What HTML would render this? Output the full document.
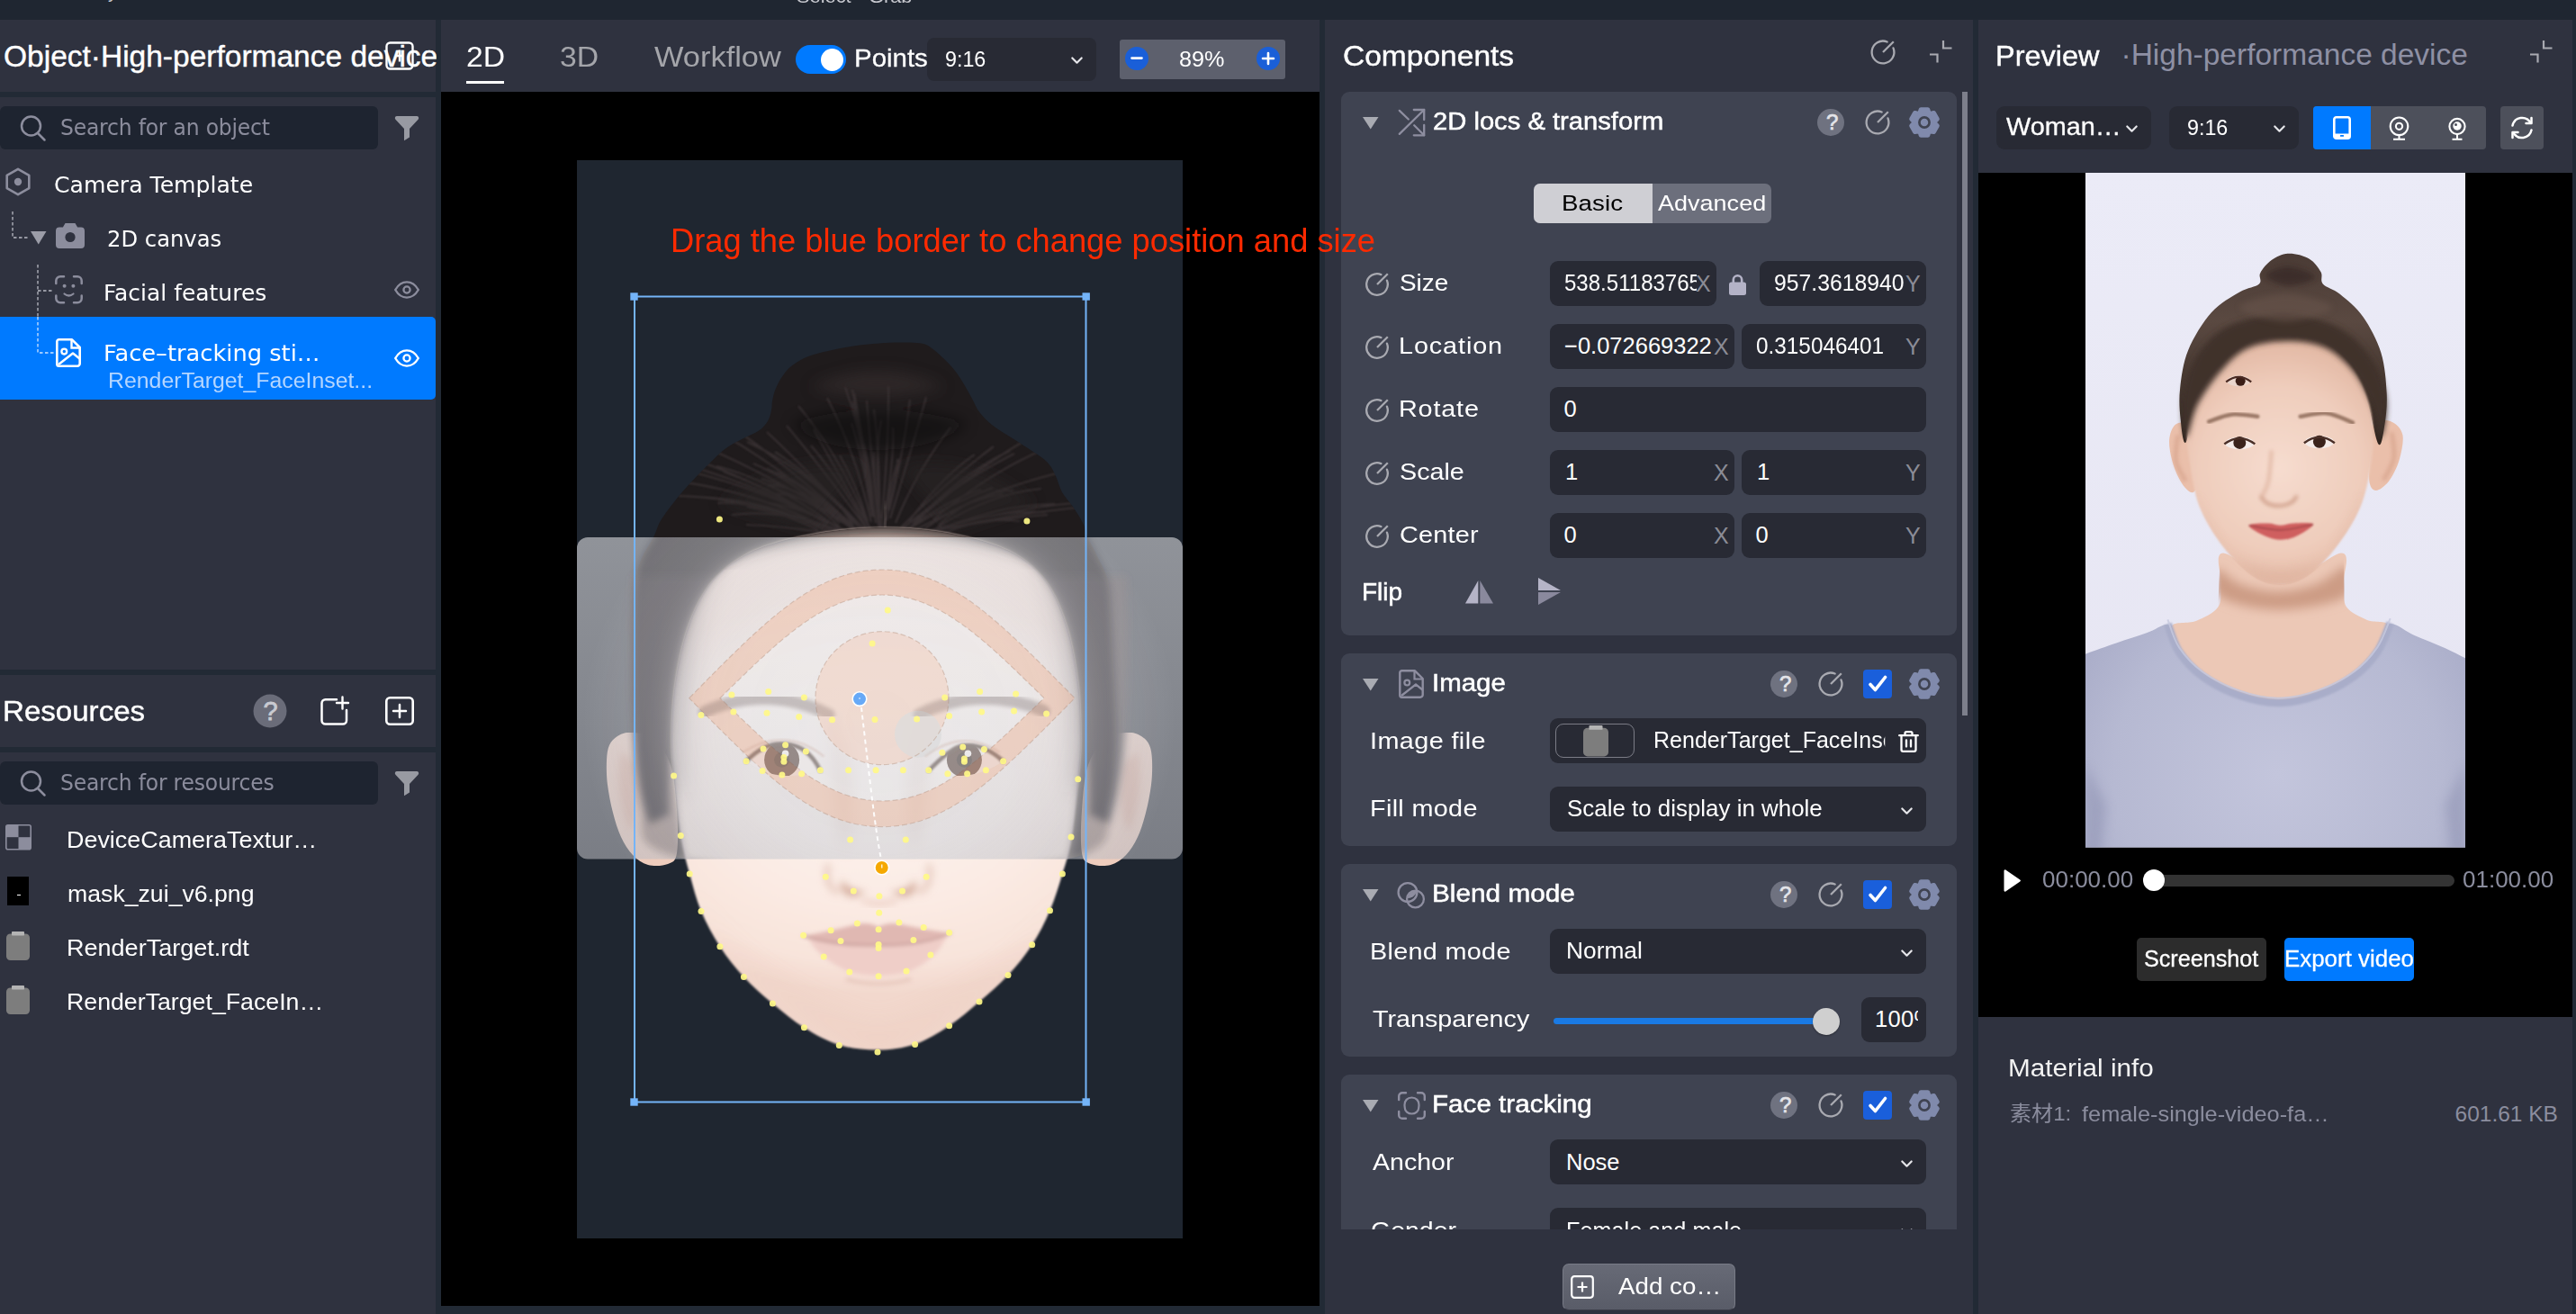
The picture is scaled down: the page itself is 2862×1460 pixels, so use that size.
<!DOCTYPE html>
<html><head><meta charset="utf-8"><title>Editor</title>
<style>
html,body{margin:0;padding:0}
body{width:2862px;height:1460px;position:relative;overflow:hidden;background:#222a35;font-family:'Liberation Sans',sans-serif}
body div,body svg{position:absolute;box-sizing:border-box}
.t{white-space:nowrap;line-height:1}
svg{overflow:visible}
</style></head><body>
<div style="left:0px;top:0px;width:2862px;height:22px;background:#1f2631;"></div>
<div style="left:0px;top:22px;width:484px;height:1438px;background:#2f323f;"></div>
<div style="left:0px;top:102px;width:484px;height:6px;background:#222a35;"></div>
<div style="left:0px;top:744px;width:484px;height:6px;background:#222a35;"></div>
<div style="left:0px;top:830px;width:484px;height:6px;background:#222a35;"></div>
<div style="left:490px;top:22px;width:976px;height:80px;background:#2f323f;"></div>
<div style="left:490px;top:102px;width:976px;height:1349px;background:#000;"></div>
<div style="left:1472px;top:22px;width:720px;height:1438px;background:#2f323f;"></div>
<div style="left:2198px;top:22px;width:660px;height:1438px;background:#2f323f;"></div>
<svg style="left:428px;top:46px;" width="32" height="32" viewBox="0 0 32 32"><rect x="1.5" y="1.5" width="29" height="29" rx="4" fill="none" stroke="#fff" stroke-width="2.4"/><path d="M16 9.500v13M12.500 16h7" stroke="#fff" stroke-width="2.400"/></svg>
<div style="left:0px;top:118px;width:420px;height:47.5px;background:#1e2430;border-radius:6px;"></div>
<svg style="left:20px;top:126px;" width="34" height="34" viewBox="0 0 34 34"><circle cx="14.5" cy="14" r="10.5" fill="none" stroke="#8c8d9d" stroke-width="2.5"/><path d="M22 22l7.5 7.5" stroke="#8c8d9d" stroke-width="2.5" stroke-linecap="round"/></svg>
<svg style="left:438px;top:128.5px;" width="28" height="28" viewBox="0 0 28 28"><path d="M3 0H25a2.200 2.200 0 0 1 1.600 3.700L17 14V23.500L11 27.200V14L1.400 3.700A2.200 2.200 0 0 1 3 0z" fill="#989aa2"/></svg>
<div style="left:0px;top:846px;width:420px;height:47.5px;background:#1e2430;border-radius:6px;"></div>
<svg style="left:20px;top:854px;" width="34" height="34" viewBox="0 0 34 34"><circle cx="14.5" cy="14" r="10.5" fill="none" stroke="#8c8d9d" stroke-width="2.5"/><path d="M22 22l7.5 7.5" stroke="#8c8d9d" stroke-width="2.5" stroke-linecap="round"/></svg>
<svg style="left:438px;top:856.5px;" width="28" height="28" viewBox="0 0 28 28"><path d="M3 0H25a2.200 2.200 0 0 1 1.600 3.700L17 14V23.500L11 27.200V14L1.400 3.700A2.200 2.200 0 0 1 3 0z" fill="#989aa2"/></svg>
<svg style="left:4px;top:186px;" width="32" height="32" viewBox="0 0 32 32"><path d="M16 1.8l12.3 7.1v14.2L16 30.2 3.7 23.1V8.9z" fill="none" stroke="#8c8d9d" stroke-width="2.6" stroke-linejoin="round"/><circle cx="16" cy="16" r="4.2" fill="#8c8d9d"/></svg>
<svg style="left:0;top:108px" width="484" height="340" viewBox="0 108 484 340"><g fill="none" stroke="#b9bac4" stroke-width="1.3" stroke-dasharray="3.5 2.5"><path d="M14 235V264H33"/><path d="M42 294V392H60"/><path d="M42 323H60"/></g></svg>
<svg style="left:33.5px;top:257px;" width="18" height="15" viewBox="0 0 18 15"><path d="M0 0h17.5L8.75 14.5z" fill="#9c9da8"/></svg>
<svg style="left:62px;top:248px;" width="32" height="28" viewBox="0 0 32 28"><path d="M10.5 0h11l2.6 4.6H28a4 4 0 0 1 4 4V24a4 4 0 0 1-4 4H4a4 4 0 0 1-4-4V8.6a4 4 0 0 1 4-4h3.9z" fill="#8c8d9d"/><circle cx="16" cy="15.5" r="5.6" fill="#2f323f"/></svg>
<svg style="left:60.5px;top:306px;" width="31" height="31.5" viewBox="0 0 31 31.5"><g fill="none" stroke="#8c8d9d" stroke-width="2.5" stroke-linecap="round"><path d="M1.3 9V6a4.7 4.7 0 0 1 4.7-4.7H10M21 1.3h4a4.7 4.7 0 0 1 4.7 4.7v3M29.7 22.5v3a4.7 4.7 0 0 1-4.7 4.7h-4M10 30.2H6a4.7 4.7 0 0 1-4.7-4.7v-3"/><path d="M10.5 20.5q5 4 10 0" stroke-width="2.2"/></g><circle cx="10.6" cy="11.7" r="2" fill="#8c8d9d"/><circle cx="20.4" cy="11.7" r="2" fill="#8c8d9d"/></svg>
<svg style="left:438px;top:312px;" width="28" height="20" viewBox="0 0 28 20"><path d="M1.2 10C4.5 4.3 9 1.4 14 1.4S23.5 4.3 26.8 10C23.5 15.7 19 18.6 14 18.6S4.500 15.7 1.2 10z" fill="none" stroke="#8c8d9d" stroke-width="2.4" stroke-linejoin="round"/><circle cx="14" cy="10" r="3.6" fill="none" stroke="#8c8d9d" stroke-width="2.3"/></svg>
<div style="left:0px;top:352px;width:484px;height:92px;background:#007aff;border-radius:0 5px 5px 0;"></div>
<svg style="left:0;top:350px" width="70" height="50" viewBox="0 350 70 50"><g fill="none" stroke="#cfe3ff" stroke-width="1.3" stroke-dasharray="3.5 2.5"><path d="M42 352V392H60"/></g></svg>
<svg style="left:62px;top:376px;" width="28" height="32" viewBox="0 0 28 32"><path d="M3.5 1.3H18l8.700 8.700V28a2.700 2.700 0 0 1-2.700 2.700H3.5A2.200 2.200 0 0 1 1.300 28.500V3.500A2.200 2.200 0 0 1 3.500 1.300z" fill="none" stroke="#fff" stroke-width="2.6" stroke-linejoin="round"/><path d="M17.5 1.500V10.500H26.500" fill="none" stroke="#fff" stroke-width="2.4"/><circle cx="9.300" cy="14.600" r="2.900" fill="none" stroke="#fff" stroke-width="2.300"/><path d="M3 29L19 16.500l7.500 6" fill="none" stroke="#fff" stroke-width="2.500" stroke-linejoin="round"/></svg>
<svg style="left:438px;top:388px;" width="28" height="20" viewBox="0 0 28 20"><path d="M1.2 10C4.5 4.3 9 1.4 14 1.4S23.5 4.3 26.8 10C23.5 15.7 19 18.6 14 18.6S4.500 15.7 1.2 10z" fill="none" stroke="#fff" stroke-width="2.4" stroke-linejoin="round"/><circle cx="14" cy="10" r="3.6" fill="none" stroke="#fff" stroke-width="2.3"/></svg>
<svg style="left:281px;top:771px;" width="38" height="38" viewBox="0 0 38 38"><circle cx="19" cy="19" r="18.500" fill="#6a6c79"/></svg>
<svg style="left:355.5px;top:774px;" width="33" height="32" viewBox="0 0 33 32"><path d="M18 3.200H5.500A4 4 0 0 0 1.500 7.200V26.500a4 4 0 0 0 4 4H25a4 4 0 0 0 4-4V15" fill="none" stroke="#fff" stroke-width="2.500" stroke-linecap="round"/><path d="M24.500 0.500V13.500M18 7H31" stroke="#fff" stroke-width="2.400" stroke-linecap="round"/></svg>
<svg style="left:428px;top:774px;" width="32" height="32" viewBox="0 0 32 32"><rect x="1.300" y="1.300" width="29.400" height="29.400" rx="4" fill="none" stroke="#fff" stroke-width="2.600"/><path d="M16 9V23M9 16H23" stroke="#fff" stroke-width="2.500" stroke-linecap="round"/></svg>
<svg style="left:5.5px;top:916px;" width="29" height="28.5" viewBox="0 0 29 28.5"><rect x="0.800" y="0.800" width="27.400" height="26.900" rx="2" fill="none" stroke="#8c8d9d" stroke-width="1.600"/><rect x="1" y="1" width="13.500" height="13.200" fill="#8c8d9d"/><rect x="14.500" y="14.200" width="13.500" height="13.300" fill="#8c8d9d"/></svg>
<div style="left:8px;top:974px;width:24px;height:31.5px;background:#000;"></div>
<div style="left:18.5px;top:993.5px;width:4px;height:1.5px;background:#fff;"></div>
<svg style="left:7px;top:1034.5px;" width="26.0" height="32.0" viewBox="0 0 26 32"><rect x="0" y="2.500" width="26" height="29.500" rx="4.500" fill="#7d7d7d"/><rect x="6" y="0" width="14" height="4.500" rx="0.800" fill="#b4b4b4"/></svg>
<svg style="left:7px;top:1094.5px;" width="26.0" height="32.0" viewBox="0 0 26 32"><rect x="0" y="2.500" width="26" height="29.500" rx="4.500" fill="#7d7d7d"/><rect x="6" y="0" width="14" height="4.500" rx="0.800" fill="#b4b4b4"/></svg>
<div style="left:518px;top:90px;width:42px;height:2.5px;background:#fff;"></div>
<div style="left:884px;top:50px;width:56px;height:31.5px;background:#007aff;border-radius:16px;"></div>
<div style="left:911.5px;top:53.5px;width:25px;height:25px;background:#fff;border-radius:13px;"></div>
<div style="left:1030px;top:42px;width:187.5px;height:47.5px;background:#282a34;border-radius:8px;"></div>
<svg style="left:1189.5px;top:63px;" width="13" height="8.5" viewBox="0 0 13 8.5"><path d="M1.300 1.500L6.500 6.700L11.700 1.500" fill="none" stroke="#e6e6ea" stroke-width="2.200" stroke-linecap="round" stroke-linejoin="round"/></svg>
<div style="left:1244px;top:44px;width:184px;height:44px;background:#5d606d;border-radius:3px;"></div>
<svg style="left:1250px;top:52px;" width="26" height="26" viewBox="0 0 26 26"><circle cx="13" cy="13" r="13" fill="#1a5fd8"/><path d="M7.500 12.600H18.500" stroke="#fff" stroke-width="2.600" stroke-linecap="round"/></svg>
<svg style="left:1396px;top:52px;" width="26" height="26" viewBox="0 0 26 26"><circle cx="13" cy="13" r="13" fill="#1a5fd8"/><path d="M7 13H19M13 7V19" stroke="#fff" stroke-width="2.600" stroke-linecap="round"/></svg>
<div style="left:641px;top:178px;width:673px;height:1198px;background:#1f2630;"></div>
<svg style="left:641px;top:178px" width="673" height="1198" viewBox="641 178 673 1198"><defs>
<filter id="b2" x="-10%" y="-10%" width="120%" height="120%"><feGaussianBlur stdDeviation="2"/></filter>
<filter id="b4" x="-10%" y="-10%" width="120%" height="120%"><feGaussianBlur stdDeviation="4"/></filter>
<filter id="b8" x="-20%" y="-20%" width="140%" height="140%"><feGaussianBlur stdDeviation="8"/></filter>
<filter id="b14" x="-30%" y="-30%" width="160%" height="160%"><feGaussianBlur stdDeviation="14"/></filter>
<filter id="b1" x="-10%" y="-10%" width="120%" height="120%"><feGaussianBlur stdDeviation="0.8"/></filter>
<radialGradient id="skin" gradientUnits="userSpaceOnUse" cx="977" cy="880" r="330" gradientTransform="translate(0 280) scale(1 0.682)"><stop offset="0" stop-color="#fef4ef"/><stop offset="0.55" stop-color="#fbebe4"/><stop offset="0.85" stop-color="#f8e4db"/><stop offset="1" stop-color="#f2d8cd"/></radialGradient>
<linearGradient id="ov" x1="0" y1="0" x2="0" y2="1"><stop offset="0" stop-color="#dedee2" stop-opacity="0.594"/><stop offset="1" stop-color="#babac0" stop-opacity="0.594"/></linearGradient><radialGradient id="ovg" gradientUnits="userSpaceOnUse" cx="977" cy="800" r="330" gradientTransform="translate(0 80) scale(1 0.9)"><stop offset="0" stop-color="#fff" stop-opacity="0.3"/><stop offset="0.5" stop-color="#fff" stop-opacity="0.27"/><stop offset="0.8" stop-color="#fff" stop-opacity="0.1"/><stop offset="1" stop-color="#fff" stop-opacity="0"/></radialGradient>
<clipPath id="stg"><rect x="641" y="178" width="673" height="1198"/></clipPath>
<clipPath id="faceclip"><path d="M983.0 586.0C1002.2 586.0 1021.3 587.3 1040.0 590.0C1058.7 592.7 1079.2 597.0 1095.0 602.0C1110.8 607.0 1123.3 612.0 1135.0 620.0C1146.7 628.0 1156.5 637.0 1165.0 650.0C1173.5 663.0 1180.5 679.7 1186.0 698.0C1191.5 716.3 1195.5 739.7 1198.0 760.0C1200.5 780.3 1200.9 803.0 1201.0 820.0C1201.1 837.0 1200.2 843.7 1198.5 862.0C1196.8 880.3 1194.0 911.8 1191.0 930.0C1188.0 948.2 1184.5 957.4 1180.4 971.0C1176.3 984.6 1172.1 998.7 1166.5 1011.8C1160.9 1024.9 1154.5 1037.8 1146.7 1049.8C1139.0 1061.8 1129.8 1073.0 1120.0 1083.5C1110.2 1094.0 1098.9 1103.6 1088.0 1113.0C1077.1 1122.4 1066.5 1131.8 1054.6 1139.7C1042.7 1147.6 1029.9 1155.7 1016.6 1160.2C1003.3 1164.7 989.0 1166.4 975.0 1166.5C961.0 1166.6 945.9 1165.1 932.3 1161.0C918.7 1156.9 905.7 1149.5 893.4 1141.8C881.1 1134.1 869.6 1124.3 858.4 1114.9C847.2 1105.5 836.1 1095.9 826.4 1085.4C816.6 1074.9 807.8 1063.8 799.9 1051.7C792.0 1039.6 784.6 1026.0 779.0 1012.6C773.4 999.1 770.0 985.0 766.2 971.0C762.4 957.0 759.2 946.8 756.3 928.6C753.4 910.4 750.3 880.1 748.6 862.0C746.9 843.9 745.8 837.0 746.0 820.0C746.2 803.0 747.0 780.3 750.0 760.0C753.0 739.7 757.7 716.3 764.0 698.0C770.3 679.7 778.3 663.0 788.0 650.0C797.7 637.0 809.2 628.0 822.0 620.0C834.8 612.0 847.8 607.0 865.0 602.0C882.2 597.0 905.3 592.7 925.0 590.0C944.7 587.3 963.8 586.0 983.0 586.0Z"/></clipPath>
</defs><g clip-path="url(#stg)"><path d="M722.0 940.0C707.3 930.0 714.5 913.3 712.0 900.0C709.5 886.7 708.2 873.7 707.0 860.0C705.8 846.3 705.7 832.2 705.0 818.0C704.3 803.8 703.4 789.2 703.0 775.0C702.6 760.8 702.8 747.2 702.9 733.0C703.0 718.8 703.0 704.3 703.5 690.0C704.0 675.7 704.1 658.7 705.7 647.0C707.3 635.3 709.6 628.3 713.0 620.0C716.4 611.7 722.5 603.9 726.0 597.0C729.5 590.1 730.3 584.9 734.0 578.6C737.7 572.3 743.2 565.3 748.0 559.0C752.8 552.7 757.0 547.7 763.0 541.0C769.0 534.3 776.8 526.1 784.0 519.0C791.2 511.9 799.0 503.9 806.0 498.6C813.0 493.3 819.8 490.3 826.0 487.0C832.2 483.7 838.5 481.8 843.0 478.6C847.5 475.4 850.7 471.8 853.0 468.0C855.3 464.2 856.2 459.7 857.0 456.0C857.8 452.3 857.3 449.7 858.0 446.0C858.7 442.3 859.3 438.3 861.0 434.0C862.7 429.7 865.0 424.5 868.0 420.0C871.0 415.5 874.0 411.0 879.0 407.0C884.0 403.0 891.2 398.8 898.0 396.0C904.8 393.2 911.7 391.9 920.0 390.0C928.3 388.1 938.5 385.9 948.0 384.5C957.5 383.1 967.8 382.1 977.0 381.4C986.2 380.7 994.9 380.4 1003.0 380.5C1011.1 380.6 1019.9 380.6 1025.7 382.0C1031.5 383.4 1034.2 386.2 1038.0 389.0C1041.8 391.8 1044.8 394.8 1048.6 398.6C1052.4 402.4 1057.3 407.3 1061.0 412.0C1064.7 416.7 1067.8 421.8 1071.0 427.0C1074.2 432.2 1077.1 437.7 1080.0 443.0C1082.9 448.3 1084.9 453.8 1088.6 458.6C1092.3 463.4 1096.8 467.8 1102.0 472.0C1107.2 476.2 1113.3 479.7 1120.0 484.0C1126.7 488.3 1134.8 493.2 1142.0 498.0C1149.2 502.8 1157.8 507.8 1163.0 513.0C1168.2 518.2 1170.2 523.3 1173.0 529.0C1175.8 534.7 1176.8 541.3 1180.0 547.0C1183.2 552.7 1188.2 557.3 1192.0 563.0C1195.8 568.7 1200.2 575.3 1203.0 581.0C1205.8 586.7 1205.8 590.5 1208.6 597.0C1211.4 603.5 1216.2 611.7 1220.0 620.0C1223.8 628.3 1228.9 635.3 1231.4 647.0C1233.9 658.7 1234.1 675.7 1235.0 690.0C1235.9 704.3 1236.3 718.8 1237.0 733.0C1237.7 747.2 1238.5 761.7 1239.0 775.0C1239.5 788.3 1240.2 798.8 1240.0 813.0C1239.8 827.2 1239.3 845.5 1238.0 860.0C1236.7 874.5 1234.7 886.7 1232.0 900.0C1229.3 913.3 1235.7 930.0 1222.0 940.0C1208.3 950.0 1190.8 955.0 1150.0 960.0C1109.2 965.0 1035.3 970.0 977.0 970.0C918.7 970.0 842.5 965.0 800.0 960.0C757.5 955.0 736.7 950.0 722.0 940.0Z" fill="#1f1b1c"/><clipPath id="hairclip"><path d="M722.0 940.0C707.3 930.0 714.5 913.3 712.0 900.0C709.5 886.7 708.2 873.7 707.0 860.0C705.8 846.3 705.7 832.2 705.0 818.0C704.3 803.8 703.4 789.2 703.0 775.0C702.6 760.8 702.8 747.2 702.9 733.0C703.0 718.8 703.0 704.3 703.5 690.0C704.0 675.7 704.1 658.7 705.7 647.0C707.3 635.3 709.6 628.3 713.0 620.0C716.4 611.7 722.5 603.9 726.0 597.0C729.5 590.1 730.3 584.9 734.0 578.6C737.7 572.3 743.2 565.3 748.0 559.0C752.8 552.7 757.0 547.7 763.0 541.0C769.0 534.3 776.8 526.1 784.0 519.0C791.2 511.9 799.0 503.9 806.0 498.6C813.0 493.3 819.8 490.3 826.0 487.0C832.2 483.7 838.5 481.8 843.0 478.6C847.5 475.4 850.7 471.8 853.0 468.0C855.3 464.2 856.2 459.7 857.0 456.0C857.8 452.3 857.3 449.7 858.0 446.0C858.7 442.3 859.3 438.3 861.0 434.0C862.7 429.7 865.0 424.5 868.0 420.0C871.0 415.5 874.0 411.0 879.0 407.0C884.0 403.0 891.2 398.8 898.0 396.0C904.8 393.2 911.7 391.9 920.0 390.0C928.3 388.1 938.5 385.9 948.0 384.5C957.5 383.1 967.8 382.1 977.0 381.4C986.2 380.7 994.9 380.4 1003.0 380.5C1011.1 380.6 1019.9 380.6 1025.7 382.0C1031.5 383.4 1034.2 386.2 1038.0 389.0C1041.8 391.8 1044.8 394.8 1048.6 398.6C1052.4 402.4 1057.3 407.3 1061.0 412.0C1064.7 416.7 1067.8 421.8 1071.0 427.0C1074.2 432.2 1077.1 437.7 1080.0 443.0C1082.9 448.3 1084.9 453.8 1088.6 458.6C1092.3 463.4 1096.8 467.8 1102.0 472.0C1107.2 476.2 1113.3 479.7 1120.0 484.0C1126.7 488.3 1134.8 493.2 1142.0 498.0C1149.2 502.8 1157.8 507.8 1163.0 513.0C1168.2 518.2 1170.2 523.3 1173.0 529.0C1175.8 534.7 1176.8 541.3 1180.0 547.0C1183.2 552.7 1188.2 557.3 1192.0 563.0C1195.8 568.7 1200.2 575.3 1203.0 581.0C1205.8 586.7 1205.8 590.5 1208.6 597.0C1211.4 603.5 1216.2 611.7 1220.0 620.0C1223.8 628.3 1228.9 635.3 1231.4 647.0C1233.9 658.7 1234.1 675.7 1235.0 690.0C1235.9 704.3 1236.3 718.8 1237.0 733.0C1237.7 747.2 1238.5 761.7 1239.0 775.0C1239.5 788.3 1240.2 798.8 1240.0 813.0C1239.8 827.2 1239.3 845.5 1238.0 860.0C1236.7 874.5 1234.7 886.7 1232.0 900.0C1229.3 913.3 1235.7 930.0 1222.0 940.0C1208.3 950.0 1190.8 955.0 1150.0 960.0C1109.2 965.0 1035.3 970.0 977.0 970.0C918.7 970.0 842.5 965.0 800.0 960.0C757.5 955.0 736.7 950.0 722.0 940.0Z"/></clipPath><g clip-path="url(#hairclip)"><path d="M962 586Q911 517 874 473M967 588Q928 521 904 477M949 595Q880 568 799 555M937 581Q869 519 798 480M1006 597Q1108 572 1217 562M941 591Q849 544 767 524M995 581Q1019 522 1056 475M933 581Q882 534 837 515M973 581Q963 505 947 446M989 576Q1013 499 1029 441M1009 597Q1091 577 1164 572M977 587Q978 507 971 455M1015 590Q1096 545 1174 526M969 568Q958 486 947 433M919 590Q853 554 771 552M952 582Q894 519 852 480M952 591Q911 560 862 543M948 584Q876 518 817 477M988 567Q1005 496 1011 444M968 580Q951 504 919 442M948 589Q897 547 846 532M962 590Q909 533 861 502M1037 591Q1106 561 1172 560M909 589Q837 553 754 551M964 579Q951 537 933 506M944 594Q884 573 830 563M945 597Q885 585 829 583M1028 587Q1067 557 1114 549M966 586Q934 507 887 451M977 586Q971 535 971 502M1005 590Q1055 554 1090 544M933 586Q897 548 860 549M1031 585Q1075 555 1123 541M1015 582Q1075 527 1141 488M1037 577Q1106 520 1166 497M1001 586Q1051 536 1104 496M939 595Q879 564 813 572M967 566Q960 488 939 430M951 588Q903 542 863 525M1041 586Q1101 548 1157 543M923 589Q839 545 746 534M976 584Q967 497 963 445M1023 595Q1099 566 1161 569M952 591Q909 547 853 538M920 582Q842 534 759 506M982 585Q997 533 997 510M984 566Q994 503 992 475M950 588Q897 540 852 521M948 583Q922 542 882 521M971 574Q959 487 949 437M978 575Q971 509 979 467M958 592Q870 535 793 501M1010 579Q1047 529 1083 505M1000 590Q1060 538 1127 504M1014 582Q1072 523 1122 501M969 574Q958 506 946 470M971 575Q968 508 952 472M1043 583Q1086 545 1126 545M1005 591Q1053 560 1103 542M958 590Q899 522 830 491M926 583Q855 532 796 518M1014 595Q1119 563 1227 556M1046 594Q1088 574 1133 579M962 585Q935 535 901 495M985 578Q990 529 999 510M979 586Q988 488 987 429M942 592Q901 566 850 558M937 589Q854 543 760 516M917 581Q863 546 804 524M920 591Q851 556 797 559" fill="none" stroke="#4a4042" stroke-width="2.200" opacity="0.55" filter="url(#b1)"/><path d="M983 560Q985 585 983 600" stroke="#8a7a76" stroke-width="5" opacity="0.5" filter="url(#b4)" fill="none"/></g><g filter="url(#b8)" opacity="0.55"><path d="M880 470Q975 440 1075 470Q1040 500 975 500T880 470Z" fill="#0c0a0b"/><path d="M900 430Q975 395 1050 430Q975 450 900 430Z" fill="#3a3031"/><path d="M800 560Q880 500 960 520L900 590Z" fill="#2c2526"/><path d="M1150 560Q1080 500 1000 520L1060 590Z" fill="#2c2526"/></g><path d="M700.0 814.0C693.5 813.7 689.8 815.7 686.0 818.0C682.2 820.3 679.0 823.5 677.0 828.0C675.0 832.5 674.3 837.7 674.0 845.0C673.7 852.3 673.8 862.3 675.0 872.0C676.2 881.7 678.5 893.3 681.0 903.0C683.5 912.7 686.3 922.2 690.0 930.0C693.7 937.8 698.0 944.8 703.0 950.0C708.0 955.2 713.5 959.3 720.0 961.0C726.5 962.7 736.7 962.2 742.0 960.0C747.3 957.8 750.3 958.0 752.0 948.0C753.7 938.0 753.2 916.3 752.0 900.0C750.8 883.7 749.5 863.3 745.0 850.0C740.5 836.7 732.5 826.0 725.0 820.0C717.5 814.0 706.5 814.3 700.0 814.0Z" fill="#efcdbd"/><path d="M1254.0 814.0C1260.5 813.7 1264.2 815.7 1268.0 818.0C1271.8 820.3 1275.0 823.5 1277.0 828.0C1279.0 832.5 1279.7 837.7 1280.0 845.0C1280.3 852.3 1280.2 862.3 1279.0 872.0C1277.8 881.7 1275.5 893.3 1273.0 903.0C1270.5 912.7 1267.7 922.2 1264.0 930.0C1260.3 937.8 1256.0 944.8 1251.0 950.0C1246.0 955.2 1240.5 959.3 1234.0 961.0C1227.5 962.7 1217.3 962.2 1212.0 960.0C1206.7 957.8 1203.7 958.0 1202.0 948.0C1200.3 938.0 1200.8 916.3 1202.0 900.0C1203.2 883.7 1204.5 863.3 1209.0 850.0C1213.5 836.7 1221.5 826.0 1229.0 820.0C1236.5 814.0 1247.5 814.3 1254.0 814.0Z" fill="#efcdbd"/><g filter="url(#b4)"><path d="M690 835Q682 880 700 925Q712 900 708 850Z" fill="#d9a48f" opacity="0.8"/><path d="M1264 835Q1272 880 1254 925Q1242 900 1246 850Z" fill="#d9a48f" opacity="0.8"/></g><g filter="url(#b4)"><path d="M702 640Q698 760 706 840Q712 890 722 915L744 905Q742 870 747 820Q750 730 795 640Z" fill="#2e2829"/><path d="M1252 640Q1256 760 1248 840Q1242 890 1232 915L1210 905Q1212 870 1207 820Q1204 730 1159 640Z" fill="#2e2829"/></g><clipPath id="ovclip0"><rect x="641" y="597" width="673" height="358"/></clipPath><g clip-path="url(#ovclip0)"><g clip-path="url(#hairclip)"><path d="M983.0 586.0C1002.2 586.0 1021.3 587.3 1040.0 590.0C1058.7 592.7 1079.2 597.0 1095.0 602.0C1110.8 607.0 1123.3 612.0 1135.0 620.0C1146.7 628.0 1156.5 637.0 1165.0 650.0C1173.5 663.0 1180.5 679.7 1186.0 698.0C1191.5 716.3 1195.5 739.7 1198.0 760.0C1200.5 780.3 1200.9 803.0 1201.0 820.0C1201.1 837.0 1200.2 843.7 1198.5 862.0C1196.8 880.3 1194.0 911.8 1191.0 930.0C1188.0 948.2 1184.5 957.4 1180.4 971.0C1176.3 984.6 1172.1 998.7 1166.5 1011.8C1160.9 1024.9 1154.5 1037.8 1146.7 1049.8C1139.0 1061.8 1129.8 1073.0 1120.0 1083.5C1110.2 1094.0 1098.9 1103.6 1088.0 1113.0C1077.1 1122.4 1066.5 1131.8 1054.6 1139.7C1042.7 1147.6 1029.9 1155.7 1016.6 1160.2C1003.3 1164.7 989.0 1166.4 975.0 1166.5C961.0 1166.6 945.9 1165.1 932.3 1161.0C918.7 1156.9 905.7 1149.5 893.4 1141.8C881.1 1134.1 869.6 1124.3 858.4 1114.9C847.2 1105.5 836.1 1095.9 826.4 1085.4C816.6 1074.9 807.8 1063.8 799.9 1051.7C792.0 1039.6 784.6 1026.0 779.0 1012.6C773.4 999.1 770.0 985.0 766.2 971.0C762.4 957.0 759.2 946.8 756.3 928.6C753.4 910.4 750.3 880.1 748.6 862.0C746.9 843.9 745.8 837.0 746.0 820.0C746.2 803.0 747.0 780.3 750.0 760.0C753.0 739.7 757.7 716.3 764.0 698.0C770.3 679.7 778.3 663.0 788.0 650.0C797.7 637.0 809.2 628.0 822.0 620.0C834.8 612.0 847.8 607.0 865.0 602.0C882.2 597.0 905.3 592.7 925.0 590.0C944.7 587.3 963.8 586.0 983.0 586.0Z" fill="#e9d6cd" filter="url(#b14)" opacity="0.7"/></g></g><path d="M983.0 586.0C1002.2 586.0 1021.3 587.3 1040.0 590.0C1058.7 592.7 1079.2 597.0 1095.0 602.0C1110.8 607.0 1123.3 612.0 1135.0 620.0C1146.7 628.0 1156.5 637.0 1165.0 650.0C1173.5 663.0 1180.5 679.7 1186.0 698.0C1191.5 716.3 1195.5 739.7 1198.0 760.0C1200.5 780.3 1200.9 803.0 1201.0 820.0C1201.1 837.0 1200.2 843.7 1198.5 862.0C1196.8 880.3 1194.0 911.8 1191.0 930.0C1188.0 948.2 1184.5 957.4 1180.4 971.0C1176.3 984.6 1172.1 998.7 1166.5 1011.8C1160.9 1024.9 1154.5 1037.8 1146.7 1049.8C1139.0 1061.8 1129.8 1073.0 1120.0 1083.5C1110.2 1094.0 1098.9 1103.6 1088.0 1113.0C1077.1 1122.4 1066.5 1131.8 1054.6 1139.7C1042.7 1147.6 1029.9 1155.7 1016.6 1160.2C1003.3 1164.7 989.0 1166.4 975.0 1166.5C961.0 1166.6 945.9 1165.1 932.3 1161.0C918.7 1156.9 905.7 1149.5 893.4 1141.8C881.1 1134.1 869.6 1124.3 858.4 1114.9C847.2 1105.5 836.1 1095.9 826.4 1085.4C816.6 1074.9 807.8 1063.8 799.9 1051.7C792.0 1039.6 784.6 1026.0 779.0 1012.6C773.4 999.1 770.0 985.0 766.2 971.0C762.4 957.0 759.2 946.8 756.3 928.6C753.4 910.4 750.3 880.1 748.6 862.0C746.9 843.9 745.8 837.0 746.0 820.0C746.2 803.0 747.0 780.3 750.0 760.0C753.0 739.7 757.7 716.3 764.0 698.0C770.3 679.7 778.3 663.0 788.0 650.0C797.7 637.0 809.2 628.0 822.0 620.0C834.8 612.0 847.8 607.0 865.0 602.0C882.2 597.0 905.3 592.7 925.0 590.0C944.7 587.3 963.8 586.0 983.0 586.0Z" fill="url(#skin)" filter="url(#b1)"/><g clip-path="url(#faceclip)"><g filter="url(#b8)"><path d="M730 600Q800 578 983 574Q1160 578 1230 600Q1180 628 1150 622Q1080 596 983 594Q880 596 810 622Q780 628 730 600Z" fill="#2a2324" opacity="0.9"/></g><g filter="url(#b14)"><path d="M735 600L800 600Q770 660 760 740Q752 800 752 880L735 880Z" fill="#3a3335" opacity="0.75"/><path d="M1215 600L1150 600Q1180 660 1190 740Q1198 800 1198 880L1215 880Z" fill="#3a3335" opacity="0.75"/></g><g filter="url(#b14)" opacity="0.12"><path d="M760 960Q800 1100 975 1175Q1150 1100 1194 960Q1150 1090 975 1140Q800 1090 760 960Z" fill="#dba995"/></g></g><g filter="url(#b2)" fill="none" stroke="#7b6a68" stroke-linecap="round" opacity="0.7"><path d="M783 791Q815 776 852 776Q890 778 921 794" stroke-width="13"/><path d="M1021 794Q1052 778 1090 776Q1127 776 1160 790" stroke-width="13"/></g><g filter="url(#b8)" opacity="0.35"><path d="M915 785Q935 800 945 850Q950 900 940 950Q925 900 925 850Q925 810 915 785Z" fill="#c08f7d"/><path d="M1040 785Q1020 800 1010 850Q1005 900 1015 950Q1030 900 1030 850Q1030 810 1040 785Z" fill="#c08f7d"/></g><path d="M829 846Q850.8 823.5 872.6 826.5Q898.0 828.5 911.4 856.5Q890.0 863.3 868.6 861.8Q848.8 860.3 829 846Z" fill="#f4ecea"/><clipPath id="ec868"><path d="M829 846Q850.8 823.5 872.6 826.5Q898.0 828.5 911.4 856.5Q890.0 863.3 868.6 861.8Q848.8 860.3 829 846Z"/></clipPath><g clip-path="url(#ec868)"><circle cx="868.6" cy="844.3" r="19.500" fill="#3c241b"/><circle cx="868.6" cy="844.3" r="8.500" fill="#1d100c"/><circle cx="872.6" cy="837.3" r="3.800" fill="#f6f2f2"/></g><path d="M829 846Q850.8 823.5 872.6 826.5Q898.0 828.5 911.4 856.5" fill="none" stroke="#3f2a24" stroke-width="4.500" stroke-linecap="round" filter="url(#b1)"/><path d="M825 836Q872.6 806.5 915.4 840.5" fill="none" stroke="#c99f90" stroke-width="2" opacity="0.7" filter="url(#b1)"/><path d="M1114.6 846Q1092.2 825.5 1069.7 828.5Q1056.7 830.5 1031.7 856.5Q1051.6 863.3 1071.4 861.8Q1093.0 860.3 1114.6 846Z" fill="#f4ecea"/><clipPath id="ec1071"><path d="M1114.6 846Q1092.2 825.5 1069.7 828.5Q1056.7 830.5 1031.7 856.5Q1051.6 863.3 1071.4 861.8Q1093.0 860.3 1114.6 846Z"/></clipPath><g clip-path="url(#ec1071)"><circle cx="1071.4" cy="844.3" r="19.500" fill="#3c241b"/><circle cx="1071.4" cy="844.3" r="8.500" fill="#1d100c"/><circle cx="1075.4" cy="837.3" r="3.800" fill="#f6f2f2"/></g><path d="M1114.6 846Q1092.2 825.5 1069.7 828.5Q1056.7 830.5 1031.7 856.5" fill="none" stroke="#3f2a24" stroke-width="4.500" stroke-linecap="round" filter="url(#b1)"/><path d="M1110.6 836Q1069.7 808.5 1027.7 840.5" fill="none" stroke="#c99f90" stroke-width="2" opacity="0.7" filter="url(#b1)"/><g filter="url(#b4)"><path d="M935 978Q945 992 962 990Q950 1000 940 994Q932 988 935 978Z" fill="#c79682" opacity="0.75"/><path d="M1017 978Q1007 992 990 990Q1002 1000 1012 994Q1020 988 1017 978Z" fill="#c79682" opacity="0.75"/><path d="M920 960Q915 985 932 992" fill="none" stroke="#dcb5a6" stroke-width="5" opacity="0.7"/><path d="M1032 960Q1037 985 1020 992" fill="none" stroke="#dcb5a6" stroke-width="5" opacity="0.7"/><path d="M958 1000Q977 1008 996 1000" fill="none" stroke="#e2bcae" stroke-width="4" opacity="0.8"/></g><g filter="url(#b2)"><path d="M893 1040Q925 1034 952 1027Q965 1024 976 1030Q988 1024 1000 1027Q1028 1033 1056 1037Q1020 1052 976 1051Q930 1052 893 1040Z" fill="#e0b8b2"/><path d="M897 1041Q930 1052 976 1051Q1022 1052 1053 1038Q1040 1068 1008 1080Q976 1088 944 1080Q910 1066 897 1041Z" fill="#efcec8"/><path d="M893 1040Q930 1052 976 1050Q1022 1052 1056 1037" fill="none" stroke="#c9a09c" stroke-width="2.400" stroke-linecap="round"/><path d="M940 1088Q976 1098 1012 1088" fill="none" stroke="#e6c6ba" stroke-width="5" opacity="0.700"/></g><rect x="641" y="597" width="673" height="357.600" rx="12" fill="url(#ov)"/><rect x="641" y="597" width="673" height="357.600" rx="12" fill="url(#ovg)"/><clipPath id="ovclip"><rect x="641" y="597" width="673" height="357.600" rx="12"/></clipPath><g clip-path="url(#ovclip)"><path d="M722.0 940.0C707.3 930.0 714.5 913.3 712.0 900.0C709.5 886.7 708.2 873.7 707.0 860.0C705.8 846.3 705.7 832.2 705.0 818.0C704.3 803.8 703.4 789.2 703.0 775.0C702.6 760.8 702.8 747.2 702.9 733.0C703.0 718.8 703.0 704.3 703.5 690.0C704.0 675.7 704.1 658.7 705.7 647.0C707.3 635.3 709.6 628.3 713.0 620.0C716.4 611.7 722.5 603.9 726.0 597.0C729.5 590.1 730.3 584.9 734.0 578.6C737.7 572.3 743.2 565.3 748.0 559.0C752.8 552.7 757.0 547.7 763.0 541.0C769.0 534.3 776.8 526.1 784.0 519.0C791.2 511.9 799.0 503.9 806.0 498.6C813.0 493.3 819.8 490.3 826.0 487.0C832.2 483.7 838.5 481.8 843.0 478.6C847.5 475.4 850.7 471.8 853.0 468.0C855.3 464.2 856.2 459.7 857.0 456.0C857.8 452.3 857.3 449.7 858.0 446.0C858.7 442.3 859.3 438.3 861.0 434.0C862.7 429.7 865.0 424.5 868.0 420.0C871.0 415.5 874.0 411.0 879.0 407.0C884.0 403.0 891.2 398.8 898.0 396.0C904.8 393.2 911.7 391.9 920.0 390.0C928.3 388.1 938.5 385.9 948.0 384.5C957.5 383.1 967.8 382.1 977.0 381.4C986.2 380.7 994.9 380.4 1003.0 380.5C1011.1 380.6 1019.9 380.6 1025.7 382.0C1031.5 383.4 1034.2 386.2 1038.0 389.0C1041.8 391.8 1044.8 394.8 1048.6 398.6C1052.4 402.4 1057.3 407.3 1061.0 412.0C1064.7 416.7 1067.8 421.8 1071.0 427.0C1074.2 432.2 1077.1 437.7 1080.0 443.0C1082.9 448.3 1084.9 453.8 1088.6 458.6C1092.3 463.4 1096.8 467.8 1102.0 472.0C1107.2 476.2 1113.3 479.7 1120.0 484.0C1126.7 488.3 1134.8 493.2 1142.0 498.0C1149.2 502.8 1157.8 507.8 1163.0 513.0C1168.2 518.2 1170.2 523.3 1173.0 529.0C1175.8 534.7 1176.8 541.3 1180.0 547.0C1183.2 552.7 1188.2 557.3 1192.0 563.0C1195.8 568.7 1200.2 575.3 1203.0 581.0C1205.8 586.7 1205.8 590.5 1208.6 597.0C1211.4 603.5 1216.2 611.7 1220.0 620.0C1223.8 628.3 1228.9 635.3 1231.4 647.0C1233.9 658.7 1234.1 675.7 1235.0 690.0C1235.9 704.3 1236.3 718.8 1237.0 733.0C1237.7 747.2 1238.5 761.7 1239.0 775.0C1239.5 788.3 1240.2 798.8 1240.0 813.0C1239.8 827.2 1239.3 845.5 1238.0 860.0C1236.7 874.5 1234.7 886.7 1232.0 900.0C1229.3 913.3 1235.7 930.0 1222.0 940.0C1208.3 950.0 1190.8 955.0 1150.0 960.0C1109.2 965.0 1035.3 970.0 977.0 970.0C918.7 970.0 842.5 965.0 800.0 960.0C757.5 955.0 736.7 950.0 722.0 940.0Z M983.0 586.0C1002.2 586.0 1021.3 587.3 1040.0 590.0C1058.7 592.7 1079.2 597.0 1095.0 602.0C1110.8 607.0 1123.3 612.0 1135.0 620.0C1146.7 628.0 1156.5 637.0 1165.0 650.0C1173.5 663.0 1180.5 679.7 1186.0 698.0C1191.5 716.3 1195.5 739.7 1198.0 760.0C1200.5 780.3 1200.9 803.0 1201.0 820.0C1201.1 837.0 1200.2 843.7 1198.5 862.0C1196.8 880.3 1194.0 911.8 1191.0 930.0C1188.0 948.2 1184.5 957.4 1180.4 971.0C1176.3 984.6 1172.1 998.7 1166.5 1011.8C1160.9 1024.9 1154.5 1037.8 1146.7 1049.8C1139.0 1061.8 1129.8 1073.0 1120.0 1083.5C1110.2 1094.0 1098.9 1103.6 1088.0 1113.0C1077.1 1122.4 1066.5 1131.8 1054.6 1139.7C1042.7 1147.6 1029.9 1155.7 1016.6 1160.2C1003.3 1164.7 989.0 1166.4 975.0 1166.5C961.0 1166.6 945.9 1165.1 932.3 1161.0C918.7 1156.9 905.7 1149.5 893.4 1141.8C881.1 1134.1 869.6 1124.3 858.4 1114.9C847.2 1105.5 836.1 1095.9 826.4 1085.4C816.6 1074.9 807.8 1063.8 799.9 1051.7C792.0 1039.6 784.6 1026.0 779.0 1012.6C773.4 999.1 770.0 985.0 766.2 971.0C762.4 957.0 759.2 946.8 756.3 928.6C753.4 910.4 750.3 880.1 748.6 862.0C746.9 843.9 745.8 837.0 746.0 820.0C746.2 803.0 747.0 780.3 750.0 760.0C753.0 739.7 757.7 716.3 764.0 698.0C770.3 679.7 778.3 663.0 788.0 650.0C797.7 637.0 809.2 628.0 822.0 620.0C834.8 612.0 847.8 607.0 865.0 602.0C882.2 597.0 905.3 592.7 925.0 590.0C944.7 587.3 963.8 586.0 983.0 586.0Z" fill-rule="evenodd" fill="#101018" opacity="0.2" filter="url(#b4)"/></g></g><g clip-path="url(#stg)"><path d="M765.7 775.7C850 690 905 633 980 633C1055 633 1110 690 1194 775.7C1110 861 1055 918.6 980 918.6C905 918.6 850 861 765.7 775.7Z M800 775.7C865 712 915 661 980 661C1045 661 1095 712 1160 775.7C1095 838 1045 890 980 890C915 890 865 838 800 775.7Z" fill="#f0b595" fill-rule="evenodd" opacity="0.42"/><path d="M800 775.7C865 712 915 661 980 661C1045 661 1095 712 1160 775.7C1095 838 1045 890 980 890C915 890 865 838 800 775.7Z" fill="#f6f4f4" opacity="0.22"/><circle cx="980" cy="775.7" r="74" fill="#f4b99c" opacity="0.3"/><circle cx="1020" cy="815.7" r="26" fill="#dcdcdc" opacity="0.75"/><g fill="none" stroke="#b89684" stroke-width="1.200" stroke-dasharray="6 3" opacity="0.45"><path d="M765.7 775.7C850 690 905 633 980 633C1055 633 1110 690 1194 775.7C1110 861 1055 918.6 980 918.6C905 918.6 850 861 765.7 775.7Z"/><path d="M800 775.7C865 712 915 661 980 661C1045 661 1095 712 1160 775.7C1095 838 1045 890 980 890C915 890 865 838 800 775.7Z"/><circle cx="980" cy="775.7" r="74"/></g></g><g opacity="0.3"><path d="M829 846Q850.8 823.5 872.6 826.5Q898.0 828.5 911.4 856.5Q890.0 863.3 868.6 861.8Q848.8 860.3 829 846Z" fill="#f4ecea"/><g clip-path="url(#ec868)"><circle cx="868.6" cy="844.3" r="19.500" fill="#3c241b"/><circle cx="868.6" cy="844.3" r="8.500" fill="#1d100c"/><circle cx="872.6" cy="837.3" r="3.800" fill="#f6f2f2"/></g><path d="M829 846Q850.8 823.5 872.6 826.5Q898.0 828.5 911.4 856.5" fill="none" stroke="#3f2a24" stroke-width="4.500" stroke-linecap="round" filter="url(#b1)"/><path d="M825 836Q872.6 806.5 915.4 840.5" fill="none" stroke="#c99f90" stroke-width="2" opacity="0.7" filter="url(#b1)"/><path d="M1114.6 846Q1092.2 825.5 1069.7 828.5Q1056.7 830.5 1031.7 856.5Q1051.6 863.3 1071.4 861.8Q1093.0 860.3 1114.6 846Z" fill="#f4ecea"/><g clip-path="url(#ec1071)"><circle cx="1071.4" cy="844.3" r="19.500" fill="#3c241b"/><circle cx="1071.4" cy="844.3" r="8.500" fill="#1d100c"/><circle cx="1075.4" cy="837.3" r="3.800" fill="#f6f2f2"/></g><path d="M1114.6 846Q1092.2 825.5 1069.7 828.5Q1056.7 830.5 1031.7 856.5" fill="none" stroke="#3f2a24" stroke-width="4.500" stroke-linecap="round" filter="url(#b1)"/><path d="M1110.6 836Q1069.7 808.5 1027.7 840.5" fill="none" stroke="#c99f90" stroke-width="2" opacity="0.7" filter="url(#b1)"/><g filter="url(#b2)" fill="none" stroke="#7b6a68" stroke-linecap="round" opacity="0.7"><path d="M783 791Q815 776 852 776Q890 778 921 794" stroke-width="13"/><path d="M1021 794Q1052 778 1090 776Q1127 776 1160 790" stroke-width="13"/></g></g><path d="M957 786Q962 830 968 880Q974 930 979 955" fill="none" stroke="#fff" stroke-width="2" stroke-dasharray="5 4" opacity="0.9"/><circle cx="799.4" cy="576.9" r="3.500" fill="#fff888" opacity="0.92"/><circle cx="1140.9" cy="579.0" r="3.500" fill="#fff888" opacity="0.92"/><circle cx="986.3" cy="678.0" r="3.500" fill="#fff888" opacity="0.92"/><circle cx="969.1" cy="715.1" r="3.500" fill="#fff888" opacity="0.92"/><circle cx="812.9" cy="772.0" r="3.500" fill="#fff888" opacity="0.92"/><circle cx="853.7" cy="768.6" r="3.500" fill="#fff888" opacity="0.92"/><circle cx="893.4" cy="774.9" r="3.500" fill="#fff888" opacity="0.92"/><circle cx="778.9" cy="794.6" r="3.500" fill="#fff888" opacity="0.92"/><circle cx="814.9" cy="791.1" r="3.500" fill="#fff888" opacity="0.92"/><circle cx="852.0" cy="792.3" r="3.500" fill="#fff888" opacity="0.92"/><circle cx="887.7" cy="796.6" r="3.500" fill="#fff888" opacity="0.92"/><circle cx="924.6" cy="799.7" r="3.500" fill="#fff888" opacity="0.92"/><circle cx="972.0" cy="799.4" r="3.500" fill="#fff888" opacity="0.92"/><circle cx="1049.7" cy="775.1" r="3.500" fill="#fff888" opacity="0.92"/><circle cx="1088.6" cy="768.6" r="3.500" fill="#fff888" opacity="0.92"/><circle cx="1128.6" cy="771.1" r="3.500" fill="#fff888" opacity="0.92"/><circle cx="1018.6" cy="798.9" r="3.500" fill="#fff888" opacity="0.92"/><circle cx="1054.6" cy="795.4" r="3.500" fill="#fff888" opacity="0.92"/><circle cx="1090.6" cy="791.1" r="3.500" fill="#fff888" opacity="0.92"/><circle cx="1126.6" cy="790.0" r="3.500" fill="#fff888" opacity="0.92"/><circle cx="1162.6" cy="792.9" r="3.500" fill="#fff888" opacity="0.92"/><circle cx="829.1" cy="845.7" r="3.500" fill="#fff888" opacity="0.92"/><circle cx="848.0" cy="832.0" r="3.500" fill="#fff888" opacity="0.92"/><circle cx="872.6" cy="827.7" r="3.500" fill="#fff888" opacity="0.92"/><circle cx="895.4" cy="835.1" r="3.500" fill="#fff888" opacity="0.92"/><circle cx="911.4" cy="855.7" r="3.500" fill="#fff888" opacity="0.92"/><circle cx="890.6" cy="859.7" r="3.500" fill="#fff888" opacity="0.92"/><circle cx="868.9" cy="860.9" r="3.500" fill="#fff888" opacity="0.92"/><circle cx="847.1" cy="856.6" r="3.500" fill="#fff888" opacity="0.92"/><circle cx="870.9" cy="841.4" r="3.500" fill="#fff888" opacity="0.92"/><circle cx="870.9" cy="846.3" r="3.500" fill="#fff888" opacity="0.92"/><circle cx="1031.7" cy="855.7" r="3.500" fill="#fff888" opacity="0.92"/><circle cx="1046.9" cy="836.3" r="3.500" fill="#fff888" opacity="0.92"/><circle cx="1069.7" cy="830.0" r="3.500" fill="#fff888" opacity="0.92"/><circle cx="1093.4" cy="832.6" r="3.500" fill="#fff888" opacity="0.92"/><circle cx="1114.6" cy="845.7" r="3.500" fill="#fff888" opacity="0.92"/><circle cx="1095.4" cy="855.7" r="3.500" fill="#fff888" opacity="0.92"/><circle cx="1074.6" cy="859.7" r="3.500" fill="#fff888" opacity="0.92"/><circle cx="1052.9" cy="859.7" r="3.500" fill="#fff888" opacity="0.92"/><circle cx="1071.4" cy="842.9" r="3.500" fill="#fff888" opacity="0.92"/><circle cx="1071.4" cy="846.3" r="3.500" fill="#fff888" opacity="0.92"/><circle cx="942.6" cy="855.7" r="3.500" fill="#fff888" opacity="0.92"/><circle cx="973.1" cy="855.7" r="3.500" fill="#fff888" opacity="0.92"/><circle cx="1003.4" cy="855.7" r="3.500" fill="#fff888" opacity="0.92"/><circle cx="748.6" cy="862.0" r="3.500" fill="#fff888" opacity="0.92"/><circle cx="1197.7" cy="865.7" r="3.500" fill="#fff888" opacity="0.92"/><circle cx="756.3" cy="928.6" r="3.500" fill="#fff888" opacity="0.92"/><circle cx="1190.0" cy="930.0" r="3.500" fill="#fff888" opacity="0.92"/><circle cx="944.6" cy="932.9" r="3.500" fill="#fff888" opacity="0.92"/><circle cx="1006.3" cy="932.9" r="3.500" fill="#fff888" opacity="0.92"/><circle cx="766.2" cy="971.0" r="3.500" fill="#fff888" opacity="0.92"/><circle cx="1180.4" cy="971.0" r="3.500" fill="#fff888" opacity="0.92"/><circle cx="917.3" cy="974.2" r="3.500" fill="#fff888" opacity="0.92"/><circle cx="1029.2" cy="974.2" r="3.500" fill="#fff888" opacity="0.92"/><circle cx="948.3" cy="990.0" r="3.500" fill="#fff888" opacity="0.92"/><circle cx="1002.5" cy="990.0" r="3.500" fill="#fff888" opacity="0.92"/><circle cx="976.9" cy="995.8" r="3.500" fill="#fff888" opacity="0.92"/><circle cx="779.0" cy="1012.6" r="3.500" fill="#fff888" opacity="0.92"/><circle cx="1166.5" cy="1011.8" r="3.500" fill="#fff888" opacity="0.92"/><circle cx="976.7" cy="1014.3" r="3.500" fill="#fff888" opacity="0.92"/><circle cx="952.4" cy="1025.9" r="3.500" fill="#fff888" opacity="0.92"/><circle cx="998.9" cy="1025.0" r="3.500" fill="#fff888" opacity="0.92"/><circle cx="923.1" cy="1033.8" r="3.500" fill="#fff888" opacity="0.92"/><circle cx="1026.2" cy="1030.6" r="3.500" fill="#fff888" opacity="0.92"/><circle cx="976.1" cy="1032.7" r="3.500" fill="#fff888" opacity="0.92"/><circle cx="892.6" cy="1039.3" r="3.500" fill="#fff888" opacity="0.92"/><circle cx="1054.6" cy="1036.3" r="3.500" fill="#fff888" opacity="0.92"/><circle cx="934.0" cy="1045.5" r="3.500" fill="#fff888" opacity="0.92"/><circle cx="1014.9" cy="1044.4" r="3.500" fill="#fff888" opacity="0.92"/><circle cx="976.1" cy="1049.6" r="3.500" fill="#fff888" opacity="0.92"/><circle cx="976.1" cy="1053.4" r="3.500" fill="#fff888" opacity="0.92"/><circle cx="799.9" cy="1051.7" r="3.500" fill="#fff888" opacity="0.92"/><circle cx="1146.7" cy="1049.8" r="3.500" fill="#fff888" opacity="0.92"/><circle cx="915.2" cy="1063.0" r="3.500" fill="#fff888" opacity="0.92"/><circle cx="1033.9" cy="1060.9" r="3.500" fill="#fff888" opacity="0.92"/><circle cx="943.8" cy="1079.9" r="3.500" fill="#fff888" opacity="0.92"/><circle cx="1007.0" cy="1079.0" r="3.500" fill="#fff888" opacity="0.92"/><circle cx="976.1" cy="1084.8" r="3.500" fill="#fff888" opacity="0.92"/><circle cx="826.4" cy="1085.4" r="3.500" fill="#fff888" opacity="0.92"/><circle cx="1120.0" cy="1083.5" r="3.500" fill="#fff888" opacity="0.92"/><circle cx="858.4" cy="1114.9" r="3.500" fill="#fff888" opacity="0.92"/><circle cx="1088.0" cy="1113.0" r="3.500" fill="#fff888" opacity="0.92"/><circle cx="893.4" cy="1141.8" r="3.500" fill="#fff888" opacity="0.92"/><circle cx="1054.6" cy="1139.7" r="3.500" fill="#fff888" opacity="0.92"/><circle cx="932.3" cy="1161.4" r="3.500" fill="#fff888" opacity="0.92"/><circle cx="1016.6" cy="1160.6" r="3.500" fill="#fff888" opacity="0.92"/><circle cx="975.0" cy="1169.1" r="3.500" fill="#fff888" opacity="0.92"/><circle cx="955" cy="776.600" r="7.800" fill="#66a9f7" stroke="#fff" stroke-width="1.600"/><circle cx="955" cy="776" r="0.800" fill="#fff"/><circle cx="979.700" cy="964" r="7.800" fill="#f5a800" stroke="#fff" stroke-width="1.600"/><rect x="979.200" y="960.500" width="1.200" height="4" fill="#fff"/><rect x="705" y="329.500" width="501.500" height="895" fill="none" stroke="#74b4f8" stroke-width="2"/><rect x="700.3" y="325.3" width="8.400" height="8.400" fill="#74b4f8"/><rect x="1202.5" y="325.3" width="8.400" height="8.400" fill="#74b4f8"/><rect x="700.3" y="1220.3" width="8.400" height="8.400" fill="#74b4f8"/><rect x="1202.5" y="1220.3" width="8.400" height="8.400" fill="#74b4f8"/></svg>
<svg style="left:2076px;top:42px;" width="32" height="32" viewBox="0 0 32 32"><g transform="translate(16 16)" fill="none" stroke="#a9aab1" stroke-width="2.3" stroke-linecap="round"><path d="M11.50 -4.65A12.4 12.4 0 1 1 4.65 -11.50"/><path d="M0 0L11.800 -11.800" stroke-linecap="butt"/></g></svg>
<svg style="left:2144px;top:45px;" width="25" height="25" viewBox="0 0 25 25"><g fill="none" stroke="#a9aab1" stroke-width="2.200"><path d="M15 0V8.500H24.500"/><path d="M0 15.500H8.500V24.500"/></g></svg>
<div style="left:2180px;top:102px;width:6px;height:693px;background:#7d7f8b;"></div>
<div style="left:1490px;top:102px;width:684px;height:604px;background:#3f4351;border-radius:9px;"></div>
<svg style="left:1514.2px;top:129.7px;" width="18" height="14" viewBox="0 0 18 14"><path d="M0 0H17.500L8.750 13.500z" fill="#a9abb2"/></svg>
<svg style="left:1550px;top:116px" width="40" height="40" viewBox="1550 116 40 40"><g fill="none" stroke="#8e8ea0" stroke-width="2.300" stroke-linecap="round" stroke-linejoin="round"><path d="M1554.800 122.900L1564.800 132.500"/><path d="M1554.800 148.900L1582.200 122"/><path d="M1570.800 122H1582.200V133"/><path d="M1571.200 139.300L1582.200 150.300"/><path d="M1570.800 150.300H1582.200V138.900"/></g></svg>
<svg style="left:2018px;top:119.80000000000001px;" width="32" height="32" viewBox="0 0 32 32"><circle cx="16" cy="16.500" r="15.500" fill="#34374300"/><circle cx="16" cy="16" r="15" fill="#6f7280"/></svg>
<svg style="left:2070px;top:120px;" width="32" height="32" viewBox="0 0 32 32"><g transform="translate(16 16)" fill="none" stroke="#a9aab1" stroke-width="2.3" stroke-linecap="round"><path d="M11.50 -4.65A12.4 12.4 0 1 1 4.65 -11.50"/><path d="M0 0L11.800 -11.800" stroke-linecap="butt"/></g></svg>
<svg style="left:2120px;top:118px;" width="36" height="36" viewBox="0 0 36 36"><g transform="translate(18 18)"><path d="M-3.83 -14.30 L3.83 -14.30 L4.90 -10.51 L6.65 -9.50 L10.47 -10.47 L14.30 -3.83 L11.56 -1.01 L11.56 1.01 L14.30 3.83 L10.47 10.47 L6.65 9.50 L4.90 10.51 L3.83 14.30 L-3.83 14.30 L-4.90 10.51 L-6.65 9.50 L-10.47 10.47 L-14.30 3.83 L-11.56 1.01 L-11.56 -1.01 L-14.30 -3.83 L-10.47 -10.47 L-6.65 -9.50 L-4.90 -10.51Z" fill="#808aac" stroke="#808aac" stroke-width="5" stroke-linejoin="round"/><circle r="5.600" fill="none" stroke="#3f4351" stroke-width="2.700"/></g></svg>
<div style="left:1704px;top:204px;width:264px;height:44px;background:#6c6f7c;border-radius:7px;"></div>
<div style="left:1704px;top:204px;width:132px;height:44px;background:#cfcfd4;border-radius:7px 0 0 7px;"></div>
<svg style="left:1514px;top:300px;" width="32" height="32" viewBox="0 0 32 32"><g transform="translate(16 16)" fill="none" stroke="#a9aab1" stroke-width="2.3" stroke-linecap="round"><path d="M10.94 -4.42A11.8 11.8 0 1 1 4.42 -10.94"/><path d="M0 0L11.800 -11.800" stroke-linecap="butt"/></g></svg>
<svg style="left:1514px;top:370px;" width="32" height="32" viewBox="0 0 32 32"><g transform="translate(16 16)" fill="none" stroke="#a9aab1" stroke-width="2.3" stroke-linecap="round"><path d="M10.94 -4.42A11.8 11.8 0 1 1 4.42 -10.94"/><path d="M0 0L11.800 -11.800" stroke-linecap="butt"/></g></svg>
<svg style="left:1514px;top:440px;" width="32" height="32" viewBox="0 0 32 32"><g transform="translate(16 16)" fill="none" stroke="#a9aab1" stroke-width="2.3" stroke-linecap="round"><path d="M10.94 -4.42A11.8 11.8 0 1 1 4.42 -10.94"/><path d="M0 0L11.800 -11.800" stroke-linecap="butt"/></g></svg>
<svg style="left:1514px;top:510px;" width="32" height="32" viewBox="0 0 32 32"><g transform="translate(16 16)" fill="none" stroke="#a9aab1" stroke-width="2.3" stroke-linecap="round"><path d="M10.94 -4.42A11.8 11.8 0 1 1 4.42 -10.94"/><path d="M0 0L11.800 -11.800" stroke-linecap="butt"/></g></svg>
<svg style="left:1514px;top:580px;" width="32" height="32" viewBox="0 0 32 32"><g transform="translate(16 16)" fill="none" stroke="#a9aab1" stroke-width="2.3" stroke-linecap="round"><path d="M10.94 -4.42A11.8 11.8 0 1 1 4.42 -10.94"/><path d="M0 0L11.800 -11.800" stroke-linecap="butt"/></g></svg>
<div style="left:1722px;top:290px;width:185px;height:49.5px;background:#282a34;border-radius:9px;"></div>
<div style="left:1955px;top:290px;width:185px;height:49.5px;background:#282a34;border-radius:9px;"></div>
<svg style="left:1921px;top:304px;" width="19" height="24" viewBox="0 0 19 24"><path d="M4.800 10V7a4.700 4.700 0 0 1 9.400 0v3" fill="none" stroke="#b4b3c7" stroke-width="2.600"/><rect x="0" y="9.500" width="19" height="14.500" rx="2.500" fill="#b4b3c7"/></svg>
<div style="left:1722px;top:360px;width:205px;height:49.5px;background:#282a34;border-radius:9px;"></div>
<div style="left:1935px;top:360px;width:205px;height:49.5px;background:#282a34;border-radius:9px;"></div>
<div style="left:1722px;top:430px;width:418px;height:49.5px;background:#282a34;border-radius:9px;"></div>
<div style="left:1722px;top:500px;width:205px;height:49.5px;background:#282a34;border-radius:9px;"></div>
<div style="left:1935px;top:500px;width:205px;height:49.5px;background:#282a34;border-radius:9px;"></div>
<div style="left:1722px;top:570px;width:205px;height:49.5px;background:#282a34;border-radius:9px;"></div>
<div style="left:1935px;top:570px;width:205px;height:49.5px;background:#282a34;border-radius:9px;"></div>
<svg style="left:1627.5px;top:644.5px;" width="31" height="26" viewBox="0 0 31 26"><path d="M14.300 0V25.500H0z" fill="#b5b4c7"/><path d="M16.300 0V25.500H31z" fill="#8a899d"/></svg>
<svg style="left:1709px;top:642px;" width="25" height="30" viewBox="0 0 25 30"><path d="M0 0V14H25z" fill="#b5b4c7"/><path d="M0 16V30L25 16z" fill="#8a899d"/></svg>
<div style="left:1490px;top:726px;width:684px;height:214px;background:#3f4351;border-radius:9px;"></div>
<svg style="left:1514.2px;top:753.7px;" width="18" height="14" viewBox="0 0 18 14"><path d="M0 0H17.500L8.750 13.500z" fill="#a9abb2"/></svg>
<svg style="left:1554px;top:744px;" width="28" height="32" viewBox="0 0 28 32"><path d="M3.500 1.300H18l8.700 8.700V28a2.700 2.700 0 0 1-2.700 2.700H3.500A2.200 2.200 0 0 1 1.300 28.500V3.500A2.200 2.200 0 0 1 3.500 1.300z" fill="none" stroke="#8e8ea0" stroke-width="2.400" stroke-linejoin="round"/><path d="M17.500 1.500V10.500H26.500" fill="none" stroke="#8e8ea0" stroke-width="2.200"/><circle cx="9.300" cy="14.600" r="2.900" fill="none" stroke="#8e8ea0" stroke-width="2.200"/><path d="M3 29L19 16.500l7.500 6" fill="none" stroke="#8e8ea0" stroke-width="2.300" stroke-linejoin="round"/></svg>
<svg style="left:1966px;top:744px;" width="32" height="32" viewBox="0 0 32 32"><circle cx="16" cy="16.500" r="15.500" fill="#34374300"/><circle cx="16" cy="16" r="15" fill="#6f7280"/></svg>
<svg style="left:2018px;top:744px;" width="32" height="32" viewBox="0 0 32 32"><g transform="translate(16 16)" fill="none" stroke="#a9aab1" stroke-width="2.3" stroke-linecap="round"><path d="M11.50 -4.65A12.4 12.4 0 1 1 4.65 -11.50"/><path d="M0 0L11.800 -11.800" stroke-linecap="butt"/></g></svg>
<div style="left:2070px;top:744px;width:32px;height:32px;background:#1a5fdb;border-radius:4px;"></div>
<svg style="left:2070px;top:744px;" width="32" height="32" viewBox="0 0 32 32"><path d="M8 16.500L13.500 22.500L24.500 8.500" fill="none" stroke="#fff" stroke-width="3.600" stroke-linecap="round" stroke-linejoin="round"/></svg>
<svg style="left:2120px;top:742px;" width="36" height="36" viewBox="0 0 36 36"><g transform="translate(18 18)"><path d="M-3.83 -14.30 L3.83 -14.30 L4.90 -10.51 L6.65 -9.50 L10.47 -10.47 L14.30 -3.83 L11.56 -1.01 L11.56 1.01 L14.30 3.83 L10.47 10.47 L6.65 9.50 L4.90 10.51 L3.83 14.30 L-3.83 14.30 L-4.90 10.51 L-6.65 9.50 L-10.47 10.47 L-14.30 3.83 L-11.56 1.01 L-11.56 -1.01 L-14.30 -3.83 L-10.47 -10.47 L-6.65 -9.50 L-4.90 -10.51Z" fill="#808aac" stroke="#808aac" stroke-width="5" stroke-linejoin="round"/><circle r="5.600" fill="none" stroke="#3f4351" stroke-width="2.700"/></g></svg>
<div style="left:1722px;top:798px;width:418px;height:49.5px;background:#282a34;border-radius:9px;"></div>
<div style="left:1728px;top:804px;width:88px;height:38px;background:transparent;border-radius:9px;border:1.600px solid #7b7c86;"></div>
<svg style="left:1759px;top:805.5px;" width="28.0" height="34.5" viewBox="0 0 26 32"><rect x="0" y="2.500" width="26" height="29.500" rx="4.500" fill="#7d7d7d"/><rect x="6" y="0" width="14" height="4.500" rx="0.800" fill="#b4b4b4"/></svg>
<svg style="left:2108.5px;top:812px;" width="23" height="24" viewBox="0 0 23 24"><g fill="none" stroke="#fff" stroke-width="2.300" stroke-linecap="round" stroke-linejoin="round"><path d="M1.200 5.200H21.800"/><path d="M7.500 4.800V2.700a1.500 1.500 0 0 1 1.500-1.500h5a1.500 1.500 0 0 1 1.500 1.500V4.800"/><path d="M3.500 5.500V21a1.800 1.800 0 0 0 1.800 1.800h12.400a1.800 1.800 0 0 0 1.800-1.800V5.500"/><path d="M9 10.500V17.500M14 10.500V17.500"/></g></svg>
<div style="left:1722px;top:874px;width:418px;height:49.5px;background:#282a34;border-radius:9px;"></div>
<svg style="left:2111.5px;top:896.5px;" width="13" height="8.5" viewBox="0 0 13 8.5"><path d="M1.300 1.500L6.500 6.700L11.700 1.500" fill="none" stroke="#e6e6ea" stroke-width="2.200" stroke-linecap="round" stroke-linejoin="round"/></svg>
<div style="left:1490px;top:960px;width:684px;height:214px;background:#3f4351;border-radius:9px;"></div>
<svg style="left:1514.2px;top:987.7px;" width="18" height="14" viewBox="0 0 18 14"><path d="M0 0H17.500L8.750 13.500z" fill="#a9abb2"/></svg>
<svg style="left:1552px;top:978px;" width="32" height="32" viewBox="0 0 32 32"><circle cx="12" cy="13.500" r="10.400" fill="none" stroke="#8e8ea0" stroke-width="2.300"/><circle cx="20.500" cy="21" r="9.400" fill="none" stroke="#8e8ea0" stroke-width="2.300"/><path d="M12.200 19.500A9.400 9.400 0 0 1 21.800 12.200A10.400 10.400 0 0 1 12.200 19.500z" fill="#8e8ea0" stroke="#8e8ea0" stroke-width="1"/></svg>
<svg style="left:1966px;top:978px;" width="32" height="32" viewBox="0 0 32 32"><circle cx="16" cy="16.500" r="15.500" fill="#34374300"/><circle cx="16" cy="16" r="15" fill="#6f7280"/></svg>
<svg style="left:2018px;top:978px;" width="32" height="32" viewBox="0 0 32 32"><g transform="translate(16 16)" fill="none" stroke="#a9aab1" stroke-width="2.3" stroke-linecap="round"><path d="M11.50 -4.65A12.4 12.4 0 1 1 4.65 -11.50"/><path d="M0 0L11.800 -11.800" stroke-linecap="butt"/></g></svg>
<div style="left:2070px;top:978px;width:32px;height:32px;background:#1a5fdb;border-radius:4px;"></div>
<svg style="left:2070px;top:978px;" width="32" height="32" viewBox="0 0 32 32"><path d="M8 16.500L13.500 22.500L24.500 8.500" fill="none" stroke="#fff" stroke-width="3.600" stroke-linecap="round" stroke-linejoin="round"/></svg>
<svg style="left:2120px;top:976px;" width="36" height="36" viewBox="0 0 36 36"><g transform="translate(18 18)"><path d="M-3.83 -14.30 L3.83 -14.30 L4.90 -10.51 L6.65 -9.50 L10.47 -10.47 L14.30 -3.83 L11.56 -1.01 L11.56 1.01 L14.30 3.83 L10.47 10.47 L6.65 9.50 L4.90 10.51 L3.83 14.30 L-3.83 14.30 L-4.90 10.51 L-6.65 9.50 L-10.47 10.47 L-14.30 3.83 L-11.56 1.01 L-11.56 -1.01 L-14.30 -3.83 L-10.47 -10.47 L-6.65 -9.50 L-4.90 -10.51Z" fill="#808aac" stroke="#808aac" stroke-width="5" stroke-linejoin="round"/><circle r="5.600" fill="none" stroke="#3f4351" stroke-width="2.700"/></g></svg>
<div style="left:1722px;top:1032px;width:418px;height:49.5px;background:#282a34;border-radius:9px;"></div>
<svg style="left:2111.5px;top:1054.5px;" width="13" height="8.5" viewBox="0 0 13 8.5"><path d="M1.300 1.500L6.500 6.700L11.700 1.500" fill="none" stroke="#e6e6ea" stroke-width="2.200" stroke-linecap="round" stroke-linejoin="round"/></svg>
<div style="left:1726px;top:1131px;width:300px;height:6.5px;background:#1a7ae4;border-radius:3.5px;"></div>
<div style="left:2014px;top:1120px;width:30px;height:30px;background:#cfcfcf;border-radius:15px;box-shadow:0 1px 2px rgba(0,0,0,.35);"></div>
<div style="left:2068px;top:1108px;width:72px;height:49.5px;background:#282a34;border-radius:9px;"></div>
<div style="left:1472px;top:1184px;width:720px;height:182px;overflow:hidden"><div style="left:-1472px;top:-1184px;width:2862px;height:1460px">
<div style="left:1490px;top:1194px;width:684px;height:300px;background:#3f4351;border-radius:9px;"></div>
<svg style="left:1514.2px;top:1221.7px;" width="18" height="14" viewBox="0 0 18 14"><path d="M0 0H17.500L8.750 13.500z" fill="#a9abb2"/></svg>
<svg style="left:1552.5px;top:1212.5px;" width="31" height="31" viewBox="0 0 31 31"><g fill="none" stroke="#8e8ea0" stroke-width="2.400" stroke-linecap="round"><path d="M1.200 9V5a3.800 3.800 0 0 1 3.800-3.800H9M22 1.200h4a3.800 3.800 0 0 1 3.800 3.800v4M29.800 22v4a3.800 3.800 0 0 1-3.800 3.800h-4M9 29.800H5a3.800 3.800 0 0 1-3.800-3.800v-4"/><path d="M15.500 6.500c5 0 8 3.600 8 8.200c0 1.500-0.300 2.600-0.300 3.300c0 3.500-3.500 6.500-7.700 6.500s-7.700-3-7.700-6.500c0-0.700-0.300-1.800-0.300-3.300c0-4.600 3-8.200 8-8.200z" stroke-width="2.200"/></g></svg>
<svg style="left:1966px;top:1212px;" width="32" height="32" viewBox="0 0 32 32"><circle cx="16" cy="16.500" r="15.500" fill="#34374300"/><circle cx="16" cy="16" r="15" fill="#6f7280"/></svg>
<svg style="left:2018px;top:1212px;" width="32" height="32" viewBox="0 0 32 32"><g transform="translate(16 16)" fill="none" stroke="#a9aab1" stroke-width="2.3" stroke-linecap="round"><path d="M11.50 -4.65A12.4 12.4 0 1 1 4.65 -11.50"/><path d="M0 0L11.800 -11.800" stroke-linecap="butt"/></g></svg>
<div style="left:2070px;top:1212px;width:32px;height:32px;background:#1a5fdb;border-radius:4px;"></div>
<svg style="left:2070px;top:1212px;" width="32" height="32" viewBox="0 0 32 32"><path d="M8 16.500L13.500 22.500L24.500 8.500" fill="none" stroke="#fff" stroke-width="3.600" stroke-linecap="round" stroke-linejoin="round"/></svg>
<svg style="left:2120px;top:1210px;" width="36" height="36" viewBox="0 0 36 36"><g transform="translate(18 18)"><path d="M-3.83 -14.30 L3.83 -14.30 L4.90 -10.51 L6.65 -9.50 L10.47 -10.47 L14.30 -3.83 L11.56 -1.01 L11.56 1.01 L14.30 3.83 L10.47 10.47 L6.65 9.50 L4.90 10.51 L3.83 14.30 L-3.83 14.30 L-4.90 10.51 L-6.65 9.50 L-10.47 10.47 L-14.30 3.83 L-11.56 1.01 L-11.56 -1.01 L-14.30 -3.83 L-10.47 -10.47 L-6.65 -9.50 L-4.90 -10.51Z" fill="#808aac" stroke="#808aac" stroke-width="5" stroke-linejoin="round"/><circle r="5.600" fill="none" stroke="#3f4351" stroke-width="2.700"/></g></svg>
<div style="left:1722px;top:1266px;width:418px;height:49.5px;background:#282a34;border-radius:9px;"></div>
<svg style="left:2111.5px;top:1288.5px;" width="13" height="8.5" viewBox="0 0 13 8.5"><path d="M1.300 1.500L6.500 6.700L11.700 1.500" fill="none" stroke="#e6e6ea" stroke-width="2.200" stroke-linecap="round" stroke-linejoin="round"/></svg>
<div style="left:1722px;top:1342px;width:418px;height:49.5px;background:#282a34;border-radius:9px;"></div>
<svg style="left:2111.5px;top:1364.5px;" width="13" height="8.5" viewBox="0 0 13 8.5"><path d="M1.300 1.500L6.500 6.700L11.700 1.500" fill="none" stroke="#e6e6ea" stroke-width="2.200" stroke-linecap="round" stroke-linejoin="round"/></svg>
<div class="t" style="left:1590.81px;top:1213.64px;font:400 27.0px/1 'Liberation Sans',sans-serif;color:#fff;transform:scaleX(1.0971);transform-origin:0 0;-webkit-text-stroke:0.500px #fff;">Face tracking</div><div class="t" style="left:1977.00px;top:1216.18px;font:400 24.0px/1 'Liberation Sans',sans-serif;color:#e4e4e9;-webkit-text-stroke:0.700px #e4e4e9;">?</div><div class="t" style="left:1524.50px;top:1279.41px;font:400 25.5px/1 'Liberation Sans',sans-serif;color:#fff;transform:scaleX(1.1193);transform-origin:0 0;">Anchor</div><div class="t" style="left:1739.99px;top:1279.41px;font:400 25.5px/1 'Liberation Sans',sans-serif;color:#fff;">Nose</div><div class="t" style="left:1523.38px;top:1355.41px;font:400 25.5px/1 'Liberation Sans',sans-serif;color:#fff;transform:scaleX(1.1175);transform-origin:0 0;">Gender</div><div class="t" style="left:1740.02px;top:1355.41px;font:400 25.5px/1 'Liberation Sans',sans-serif;color:#fff;transform:scaleX(0.9906);transform-origin:0 0;">Female and male</div></div></div>
<div style="left:1736px;top:1404px;width:192px;height:52px;background:#60636f;border-radius:7px;background:linear-gradient(#676a76,#595c68);border:1px solid #787b86;border-bottom-color:#3b3d48;"></div>
<svg style="left:1745px;top:1417px;" width="26" height="26" viewBox="0 0 26 26"><rect x="1.200" y="1.200" width="23.600" height="23.600" rx="3" fill="none" stroke="#fff" stroke-width="2.200"/><path d="M13 7.500V18.500M7.500 13H18.500" stroke="#fff" stroke-width="2.200"/></svg>
<svg style="left:2810.5px;top:45px;" width="25" height="25" viewBox="0 0 25 25"><g fill="none" stroke="#a9aab1" stroke-width="2.200"><path d="M15 0V8.500H24.500"/><path d="M0 15.500H8.500V24.500"/></g></svg>
<div style="left:2218px;top:118px;width:171.5px;height:47.5px;background:#282a34;border-radius:9px;"></div>
<svg style="left:2361.5px;top:138.5px;" width="13" height="8.5" viewBox="0 0 13 8.5"><path d="M1.300 1.500L6.500 6.700L11.700 1.500" fill="none" stroke="#e6e6ea" stroke-width="2.200" stroke-linecap="round" stroke-linejoin="round"/></svg>
<div style="left:2410px;top:118px;width:143.5px;height:47.5px;background:#282a34;border-radius:9px;"></div>
<svg style="left:2525.5px;top:138.5px;" width="13" height="8.5" viewBox="0 0 13 8.5"><path d="M1.300 1.500L6.500 6.700L11.700 1.500" fill="none" stroke="#e6e6ea" stroke-width="2.200" stroke-linecap="round" stroke-linejoin="round"/></svg>
<div style="left:2570px;top:118px;width:192px;height:48px;background:#4d505b;border-radius:4px;"></div>
<div style="left:2570px;top:118px;width:64px;height:48px;background:#007aff;border-radius:4px 0 0 4px;"></div>
<svg style="left:2592px;top:129px;" width="20" height="26" viewBox="0 0 20 26"><rect x="1.300" y="1.300" width="17.400" height="23.400" rx="2.500" fill="none" stroke="#fff" stroke-width="2.600"/><rect x="1.300" y="19.500" width="17.400" height="5.200" fill="#fff"/><rect x="8" y="21" width="4" height="1.800" rx="0.500" fill="#007aff"/></svg>
<svg style="left:2654px;top:129px;" width="24" height="27" viewBox="0 0 24 27"><circle cx="11.500" cy="11.300" r="9.800" fill="none" stroke="#fff" stroke-width="2.100"/><circle cx="11.500" cy="11.300" r="3.600" fill="none" stroke="#fff" stroke-width="2.100"/><path d="M11.500 21V25.500M5 25.800H18" stroke="#fff" stroke-width="2" fill="none"/></svg>
<svg style="left:2719px;top:130px;" width="24" height="26" viewBox="0 0 24 26"><circle cx="11" cy="10.500" r="8.600" fill="none" stroke="#fff" stroke-width="2.100"/><circle cx="11" cy="10" r="4.700" fill="#fff"/><circle cx="9.500" cy="8.500" r="1.500" fill="#4d505b"/><path d="M11 19V24.500M5.500 24.800H16.500" stroke="#fff" stroke-width="2" fill="none"/></svg>
<div style="left:2778px;top:118px;width:48px;height:48px;background:#4d505b;border-radius:4px;"></div>
<svg style="left:2788px;top:128px;" width="28" height="28" viewBox="0 0 28 28"><g fill="none" stroke="#fff" stroke-width="2.500" stroke-linecap="round" stroke-linejoin="round"><path d="M3.500 11.500A10.800 10.800 0 0 1 23.500 8.500"/><path d="M24.500 16.500A10.800 10.800 0 0 1 4.500 19.500"/><path d="M24.500 3V9H18.500"/><path d="M3.500 25V19H9.500"/></g></svg>
<div style="left:2198px;top:192px;width:660px;height:938px;background:#000;"></div>
<svg style="left:2317px;top:192px" width="422" height="750" viewBox="2317 192 422 750"><defs>
<filter id="pb1" x="-10%" y="-10%" width="120%" height="120%"><feGaussianBlur stdDeviation="1"/></filter>
<filter id="pb2" x="-10%" y="-10%" width="120%" height="120%"><feGaussianBlur stdDeviation="2"/></filter>
<filter id="pb3" x="-10%" y="-10%" width="120%" height="120%"><feGaussianBlur stdDeviation="3"/></filter>
<filter id="pb6" x="-20%" y="-20%" width="140%" height="140%"><feGaussianBlur stdDeviation="6"/></filter>
<clipPath id="pclip"><rect x="2317" y="192" width="422" height="749.500"/></clipPath>
<linearGradient id="pbg" x1="0" y1="0" x2="0" y2="1"><stop offset="0" stop-color="#ebebf7"/><stop offset="1" stop-color="#e6e5f2"/></linearGradient>
<radialGradient id="pskin" gradientUnits="userSpaceOnUse" cx="2532" cy="520" r="150"><stop offset="0" stop-color="#f6dccf"/><stop offset="0.6" stop-color="#efcdbc"/><stop offset="1" stop-color="#e0b5a0"/></radialGradient>
<radialGradient id="pshirt" gradientUnits="userSpaceOnUse" cx="2530" cy="860" r="260"><stop offset="0" stop-color="#c3c5dc"/><stop offset="0.7" stop-color="#b6b9d2"/><stop offset="1" stop-color="#a9acc8"/></radialGradient>
<linearGradient id="phair" x1="0" y1="0" x2="0" y2="1"><stop offset="0" stop-color="#4a3b35"/><stop offset="0.35" stop-color="#5a4941"/><stop offset="1" stop-color="#30251f"/></linearGradient>
</defs><g clip-path="url(#pclip)"><rect x="2317" y="192" width="422" height="750" fill="url(#pbg)"/><path d="M2311.3 728.8C2318.0 726.5 2338.9 718.8 2351.3 714.6C2363.6 710.3 2375.5 706.5 2385.5 703.1C2395.5 699.8 2405.0 691.2 2411.2 694.6C2417.4 697.9 2416.5 714.1 2422.7 723.1C2428.8 732.2 2437.4 741.2 2448.4 748.8C2459.3 756.4 2474.5 764.1 2488.3 768.8C2502.1 773.6 2516.9 777.4 2531.2 777.4C2545.4 777.4 2560.2 773.6 2574.0 768.8C2587.8 764.1 2603.0 756.4 2614.0 748.8C2624.9 741.2 2633.0 732.4 2639.7 723.1C2646.3 713.9 2646.8 696.3 2654.0 693.4C2661.1 690.6 2672.0 701.5 2682.5 706.0C2693.0 710.5 2706.3 715.5 2716.8 720.3C2727.2 725.0 2740.6 732.2 2745.3 734.5L2745.3 951.6L2311.3 951.6Z" fill="url(#pshirt)"/><path d="M2470.1 614.6C2459.0 614.6 2468.7 638.9 2467.8 648.9C2466.8 658.9 2469.0 667.7 2464.3 674.6C2459.7 681.4 2448.4 686.5 2439.8 690.0C2431.2 693.5 2415.5 690.0 2412.9 695.7C2410.4 701.4 2418.3 715.2 2424.4 724.3C2430.5 733.3 2438.8 742.4 2449.5 750.0C2460.2 757.6 2474.7 765.2 2488.3 770.0C2501.9 774.7 2516.9 778.5 2531.2 778.5C2545.4 778.5 2560.4 774.7 2574.0 770.0C2587.6 765.2 2602.2 757.6 2612.8 750.0C2623.5 742.4 2631.3 733.5 2638.0 724.3C2644.6 715.0 2654.1 700.5 2652.8 694.6C2651.5 688.7 2637.6 692.2 2630.0 688.9C2622.3 685.5 2611.5 681.2 2607.1 674.6C2602.7 667.9 2604.6 658.9 2603.7 648.9C2602.7 638.9 2613.0 614.6 2601.4 614.6C2589.8 614.6 2555.9 648.9 2534.0 648.9C2512.1 648.9 2481.1 614.6 2470.1 614.6Z" fill="#ecc8b6"/><clipPath id="pnk"><path d="M2467.8 591.8L2603.7 591.8L2604.8 674.6L2654.0 694.6L2531.2 780.2L2411.2 694.6L2464.3 674.6Z"/></clipPath><g clip-path="url(#pnk)"><g filter="url(#pb6)"><path d="M2462.6 631.7C2466.2 629.4 2476.9 644.6 2488.3 648.9C2499.8 653.2 2516.9 657.4 2531.2 657.4C2545.4 657.4 2561.1 653.6 2574.0 648.9C2586.8 644.1 2603.0 626.5 2608.3 628.9C2613.5 631.3 2618.3 655.1 2605.4 663.2C2592.6 671.2 2554.3 677.4 2531.2 677.4C2508.0 677.4 2478.1 670.8 2466.6 663.2C2455.2 655.5 2459.0 634.1 2462.6 631.7Z" fill="#c9977f" opacity="0.9"/></g></g><path d="M2408.4 693.4C2410.5 698.6 2414.5 714.6 2420.9 724.3C2427.4 734.0 2436.2 743.7 2447.2 751.7C2458.3 759.7 2473.2 767.4 2487.2 772.2C2501.2 777.1 2516.5 780.8 2531.2 780.8C2545.8 780.8 2561.1 777.1 2575.1 772.2C2589.1 767.4 2604.1 759.7 2615.1 751.7C2626.2 743.7 2634.6 734.2 2641.4 724.3C2648.1 714.4 2653.3 697.6 2655.7 692.3" fill="none" stroke="#a9adc9" stroke-width="9" filter="url(#pb1)"/><path d="M2408.4 688.3C2410.5 693.4 2414.5 709.4 2420.9 719.1C2427.4 728.8 2436.2 738.5 2447.2 746.5C2458.3 754.5 2473.2 762.2 2487.2 767.1C2501.2 772.0 2516.5 775.7 2531.2 775.7C2545.8 775.7 2561.1 772.0 2575.1 767.1C2589.1 762.2 2604.1 754.5 2615.1 746.5C2626.2 738.5 2634.6 729.0 2641.4 719.1C2648.1 709.2 2653.3 692.5 2655.7 687.1" fill="none" stroke="#c7c9df" stroke-width="2" opacity="0.8"/><g filter="url(#pb6)" opacity="0.55"><path d="M2317.0 848.8L2339.8 894.5L2334.1 951.6L2317.0 951.6Z" fill="#8f93b2"/><path d="M2739.0 848.8L2716.8 894.5L2723.6 951.6L2739.0 951.6Z" fill="#8f93b2"/></g><path d="M2431.2 471.8C2427.7 468.0 2420.5 469.0 2416.9 471.8C2413.4 474.7 2410.6 481.8 2410.1 489.0C2409.6 496.1 2411.7 506.6 2414.1 514.7C2416.5 522.8 2420.8 532.1 2424.4 537.5C2428.0 542.9 2432.9 547.7 2435.8 547.2C2438.6 546.7 2441.1 543.4 2441.5 534.7C2441.9 525.9 2439.8 505.2 2438.1 494.7C2436.4 484.2 2434.7 475.6 2431.2 471.8Z" fill="#eabfaa"/><path d="M2636.8 470.7C2640.5 466.3 2651.4 466.3 2656.8 468.4C2662.2 470.5 2667.9 476.0 2669.4 483.3C2670.8 490.5 2667.9 503.3 2665.4 511.8C2662.8 520.4 2658.2 529.1 2654.0 534.7C2649.7 540.2 2643.3 545.1 2639.7 544.9C2636.1 544.8 2633.1 541.9 2632.2 533.5C2631.4 525.1 2633.8 505.2 2634.5 494.7C2635.3 484.2 2633.1 475.1 2636.8 470.7Z" fill="#eabfaa"/><g filter="url(#pb2)" opacity="0.7"><path d="M2419.8 483.3C2419.4 488.0 2416.1 503.3 2417.5 511.8C2418.9 520.4 2426.6 530.9 2428.4 534.7" fill="none" stroke="#d19c85" stroke-width="4"/><path d="M2657.4 480.4C2657.8 485.2 2661.2 500.1 2659.7 509.0C2658.1 517.8 2650.1 529.4 2648.2 533.5" fill="none" stroke="#d19c85" stroke-width="4"/></g><path d="M2428.4 491.8C2425.5 494.7 2423.7 476.1 2422.7 466.1C2421.6 456.1 2420.7 444.7 2422.1 431.9C2423.5 419.0 2425.4 403.1 2431.2 389.0C2437.0 374.9 2447.4 358.1 2456.9 347.3C2466.4 336.6 2479.5 329.8 2488.3 324.5C2497.2 319.2 2506.2 318.9 2510.0 315.4C2513.8 311.8 2508.9 307.7 2511.2 303.4C2513.5 299.0 2518.5 292.7 2523.7 289.1C2529.0 285.5 2535.6 281.9 2542.6 281.7C2549.5 281.4 2559.4 283.9 2565.4 287.4C2571.4 290.8 2576.0 297.6 2578.6 302.2C2581.1 306.9 2577.3 311.3 2580.8 315.4C2584.4 319.5 2592.3 320.7 2599.7 326.8C2607.1 332.9 2617.8 341.1 2625.4 351.9C2633.0 362.8 2641.0 377.6 2645.4 391.9C2649.8 406.2 2651.0 424.2 2651.7 437.6C2652.3 450.9 2650.9 462.5 2649.4 471.8C2647.9 481.2 2646.1 498.3 2642.5 493.5C2639.0 488.8 2634.9 458.3 2628.3 443.3C2621.6 428.2 2618.3 413.8 2602.6 403.3C2586.8 392.8 2556.9 379.5 2534.0 380.5C2511.2 381.4 2481.2 397.6 2465.5 409.0C2449.8 420.4 2446.0 435.2 2439.8 449.0C2433.6 462.8 2431.2 489.0 2428.4 491.8Z" fill="url(#phair)"/><path d="M2536.9 373.6C2550.2 373.6 2567.3 374.2 2579.7 379.3C2592.1 384.5 2602.7 394.3 2611.1 404.5C2619.5 414.6 2625.7 428.2 2630.0 440.4C2634.2 452.6 2636.1 465.2 2636.8 477.6C2637.6 489.9 2636.9 500.4 2634.5 514.7C2632.2 529.0 2629.0 547.7 2622.5 563.2C2616.1 578.7 2605.5 594.9 2595.7 607.8C2585.9 620.6 2574.2 633.3 2563.7 640.3C2553.2 647.4 2543.1 650.0 2532.9 650.0C2522.7 650.0 2513.1 647.4 2502.6 640.3C2492.1 633.3 2479.9 620.6 2470.1 607.8C2460.3 594.9 2450.0 578.7 2443.8 563.2C2437.6 547.7 2435.2 529.0 2432.9 514.7C2430.6 500.4 2428.9 489.9 2430.1 477.6C2431.2 465.2 2433.7 452.6 2439.8 440.4C2445.9 428.2 2456.6 414.6 2466.6 404.5C2476.6 394.3 2488.0 384.5 2499.8 379.3C2511.5 374.2 2523.5 373.6 2536.9 373.6Z" fill="url(#pskin)" filter="url(#pb1)"/><g filter="url(#pb3)"><path d="M2428.9 486.1C2426.3 485.0 2423.7 458.0 2425.5 443.3C2427.3 428.5 2431.7 410.9 2439.8 397.6C2447.9 384.3 2457.9 371.4 2474.1 363.3C2490.2 355.2 2516.4 349.1 2536.9 349.1C2557.3 349.1 2580.7 355.2 2596.8 363.3C2613.0 371.4 2624.9 384.3 2634.0 397.6C2643.0 410.9 2649.2 428.5 2651.1 443.3C2653.0 458.0 2648.0 485.2 2645.4 486.1C2642.7 487.1 2640.3 461.4 2635.1 449.0C2629.9 436.6 2622.7 422.3 2614.0 411.9C2605.2 401.4 2594.9 391.6 2582.6 386.2C2570.2 380.7 2554.0 379.1 2539.7 379.3C2525.5 379.5 2509.1 381.6 2496.9 387.3C2484.7 393.0 2475.9 403.1 2466.6 413.6C2457.4 424.1 2447.8 438.0 2441.5 450.1C2435.2 462.2 2431.6 487.3 2428.9 486.1Z" fill="#3f322c"/></g><g filter="url(#pb3)" opacity="0.5"><path d="M2516.9 306.2C2516.9 302.6 2533.3 295.7 2542.6 295.9C2551.9 296.2 2572.9 304.3 2572.9 307.9C2572.9 311.6 2551.9 317.9 2542.6 317.6C2533.3 317.4 2516.9 309.8 2516.9 306.2Z" fill="#2a1f1b"/><path d="M2488.3 341.6C2488.3 336.4 2522.6 326.2 2539.7 326.2C2556.9 326.2 2591.1 336.4 2591.1 341.6C2591.1 346.9 2556.9 357.6 2539.7 357.6C2522.6 357.6 2488.3 346.9 2488.3 341.6Z" fill="#6b574d"/></g><g filter="url(#pb1)" fill="none" stroke="#8d6a58" stroke-width="4.500" stroke-linecap="round" opacity="0.85"><path d="M2454.1 468.4C2458.3 467.1 2470.7 461.4 2479.8 460.4C2488.8 459.5 2503.6 462.3 2508.3 462.7"/><path d="M2555.7 462.7C2560.7 462.1 2575.7 458.1 2585.4 459.3C2595.1 460.4 2609.2 467.8 2614.0 469.6"/></g><ellipse cx="2488.3" cy="492.4" rx="16" ry="7" fill="#f4ecea"/><circle cx="2488.3" cy="491.9" r="7" fill="#3a231c"/><path d="M2471.3 493.4Q2488.3 480.4 2505.3 493.4" fill="none" stroke="#4a2f27" stroke-width="2.400"/><ellipse cx="2576.9" cy="491.3" rx="16" ry="7" fill="#f4ecea"/><circle cx="2576.9" cy="490.8" r="7" fill="#3a231c"/><path d="M2559.9 492.3Q2576.9 479.3 2593.9 492.3" fill="none" stroke="#4a2f27" stroke-width="2.400"/><ellipse cx="2487.2" cy="423.3" rx="13" ry="6" fill="#ead6cd"/><circle cx="2489.2" cy="423.3" r="5.500" fill="#3a1d16"/><path d="M2473.2 424.3Q2487.2 413.3 2501.2 424.3" fill="none" stroke="#4a2a22" stroke-width="2.200"/><g filter="url(#pb2)"><path d="M2511.2 550.7C2512.3 552.0 2514.6 556.7 2518.0 558.6C2521.5 560.6 2527.2 562.1 2531.7 562.1C2536.3 562.1 2542.0 560.6 2545.4 558.6C2548.9 556.7 2551.2 552.0 2552.3 550.7" fill="none" stroke="#cf9f89" stroke-width="3.500"/><path d="M2523.7 500.4C2523.2 506.1 2522.0 526.3 2520.3 534.7C2518.6 543.0 2514.6 548.0 2513.5 550.7" fill="none" stroke="#e3bba8" stroke-width="4"/></g><g filter="url(#pb1)"><path d="M2498.6 583.8C2499.3 581.5 2513.8 581.5 2519.7 581.5C2525.6 581.5 2529.3 583.8 2534.0 583.8C2538.8 583.8 2542.3 581.7 2548.3 581.5C2554.3 581.3 2569.3 580.3 2570.0 582.6C2570.7 584.9 2558.3 592.3 2552.3 595.2C2546.3 598.1 2540.1 599.8 2534.0 599.8C2527.9 599.8 2521.6 597.9 2515.7 595.2C2509.8 592.5 2497.9 586.1 2498.6 583.8Z" fill="#cf5e5e"/><path d="M2498.6 583.8C2504.5 584.6 2522.1 589.1 2534.0 588.9C2545.9 588.7 2564.0 583.7 2570.0 582.6" fill="none" stroke="#a3464a" stroke-width="1.600"/></g><clipPath id="pfc"><path d="M2536.9 373.6C2550.2 373.6 2567.3 374.2 2579.7 379.3C2592.1 384.5 2602.7 394.3 2611.1 404.5C2619.5 414.6 2625.7 428.2 2630.0 440.4C2634.2 452.6 2636.1 465.2 2636.8 477.6C2637.6 489.9 2636.9 500.4 2634.5 514.7C2632.2 529.0 2629.0 547.7 2622.5 563.2C2616.1 578.7 2605.5 594.9 2595.7 607.8C2585.9 620.6 2574.2 633.3 2563.7 640.3C2553.2 647.4 2543.1 650.0 2532.9 650.0C2522.7 650.0 2513.1 647.4 2502.6 640.3C2492.1 633.3 2479.9 620.6 2470.1 607.8C2460.3 594.9 2450.0 578.7 2443.8 563.2C2437.6 547.7 2435.2 529.0 2432.9 514.7C2430.6 500.4 2428.9 489.9 2430.1 477.6C2431.2 465.2 2433.7 452.6 2439.8 440.4C2445.9 428.2 2456.6 414.6 2466.6 404.5C2476.6 394.3 2488.0 384.5 2499.8 379.3C2511.5 374.2 2523.5 373.6 2536.9 373.6Z"/></clipPath><g clip-path="url(#pfc)"><g filter="url(#pb6)" opacity="0.3"><path d="M2439.8 546.1C2439.5 545.1 2457.9 590.3 2468.3 606.0C2478.8 621.8 2491.9 633.2 2502.6 640.3C2513.4 647.5 2522.7 648.9 2532.9 648.9C2543.1 648.9 2553.1 647.5 2563.7 640.3C2574.4 633.2 2586.6 621.8 2596.8 606.0C2607.1 590.3 2625.4 545.1 2625.4 546.1C2625.4 547.0 2612.3 597.3 2596.8 611.8C2581.4 626.2 2554.0 632.9 2532.9 632.9C2511.7 632.9 2485.6 626.2 2470.1 611.8C2454.5 597.3 2440.1 547.0 2439.8 546.1Z" fill="#d19f88"/></g></g></g></svg>
<svg style="left:2225.5px;top:965.5px;" width="19" height="25" viewBox="0 0 19 25"><path d="M0.500 1.500a1.200 1.200 0 0 1 1.800-1L18.300 11.500a1.200 1.200 0 0 1 0 2L2.300 24.500a1.200 1.200 0 0 1-1.800-1z" fill="#fff"/></svg>
<div style="left:2386px;top:972px;width:341px;height:12.5px;background:#333;border-radius:6.5px;"></div>
<div style="left:2380.5px;top:966px;width:24px;height:24px;background:#fff;border-radius:12px;"></div>
<div style="left:2374px;top:1042px;width:144px;height:48px;background:#2c2c2c;border-radius:5px;"></div>
<div style="left:2538px;top:1042px;width:144px;height:48px;background:#007aff;border-radius:5px;"></div>
<div class="t" style="left:885.00px;top:-14.35px;font:400 20.5px/1 'Liberation Sans',sans-serif;color:#c8c9d0;transform:scaleX(1.0634);transform-origin:0 0;">Select · Grab</div>
<div class="t" style="left:120.00px;top:-19.35px;font:400 20.5px/1 'Liberation Sans',sans-serif;color:#c8c9d0;">y</div>
<div class="t" style="left:4.00px;top:45.64px;font:400 33.5px/1 'Liberation Sans',sans-serif;color:#fff;width:481.1px;overflow:hidden;padding-bottom:0.3em;-webkit-text-stroke:0.4px #fff;">Object·High-performance device</div>
<div class="t" style="left:67.08px;top:128.93px;font:400 25.5px/1 'DejaVu Sans',sans-serif;color:#8b8c9c;letter-spacing:-0.220px;transform:scaleX(0.9200);transform-origin:0 0;">Search for an object</div>
<div class="t" style="left:67.08px;top:856.93px;font:400 25.5px/1 'DejaVu Sans',sans-serif;color:#8b8c9c;letter-spacing:-0.216px;transform:scaleX(0.9200);transform-origin:0 0;">Search for resources</div>
<div class="t" style="left:60.02px;top:192.93px;font:400 25.5px/1 'DejaVu Sans',sans-serif;color:#fff;transform:scaleX(0.9850);transform-origin:0 0;">Camera Template</div>
<div class="t" style="left:118.55px;top:252.93px;font:400 25.5px/1 'DejaVu Sans',sans-serif;color:#fff;transform:scaleX(0.9510);transform-origin:0 0;">2D canvas</div>
<div class="t" style="left:115.04px;top:313.43px;font:400 25.5px/1 'DejaVu Sans',sans-serif;color:#fff;transform:scaleX(0.9785);transform-origin:0 0;">Facial features</div>
<div class="t" style="left:114.98px;top:380.43px;font:400 25.5px/1 'DejaVu Sans',sans-serif;color:#fff;transform:scaleX(1.0076);transform-origin:0 0;">Face–tracking sti…</div>
<div class="t" style="left:119.92px;top:411.53px;font:400 23.0px/1 'Liberation Sans',sans-serif;color:#b5d6ff;transform:scaleX(1.0799);transform-origin:0 0;">RenderTarget_FaceInset...</div>
<div class="t" style="left:2.93px;top:773.91px;font:400 32.0px/1 'Liberation Sans',sans-serif;color:#fff;transform:scaleX(1.0337);transform-origin:0 0;-webkit-text-stroke:0.4px #fff;">Resources</div>
<div class="t" style="left:292.50px;top:775.95px;font:400 29.0px/1 'Liberation Sans',sans-serif;color:#c9cad1;-webkit-text-stroke:0.800px #c9cad1;">?</div>
<div class="t" style="left:74.43px;top:920.49px;font:400 26.0px/1 'Liberation Sans',sans-serif;color:#fff;transform:scaleX(1.0351);transform-origin:0 0;">DeviceCameraTextur…</div>
<div class="t" style="left:75.47px;top:980.49px;font:400 26.0px/1 'Liberation Sans',sans-serif;color:#fff;transform:scaleX(1.0256);transform-origin:0 0;">mask_zui_v6.png</div>
<div class="t" style="left:74.42px;top:1040.49px;font:400 26.0px/1 'Liberation Sans',sans-serif;color:#fff;transform:scaleX(1.0393);transform-origin:0 0;">RenderTarget.rdt</div>
<div class="t" style="left:74.44px;top:1100.49px;font:400 26.0px/1 'Liberation Sans',sans-serif;color:#fff;transform:scaleX(1.0276);transform-origin:0 0;">RenderTarget_FaceIn…</div>
<div class="t" style="left:517.91px;top:47.76px;font:400 31.0px/1 'Liberation Sans',sans-serif;color:#fff;transform:scaleX(1.0875);transform-origin:0 0;">2D</div>
<div class="t" style="left:621.91px;top:47.76px;font:400 31.0px/1 'Liberation Sans',sans-serif;color:#a4a5aa;transform:scaleX(1.0875);transform-origin:0 0;">3D</div>
<div class="t" style="left:726.50px;top:47.76px;font:400 31.0px/1 'Liberation Sans',sans-serif;color:#a4a5aa;transform:scaleX(1.1098);transform-origin:0 0;">Workflow</div>
<div class="t" style="left:948.93px;top:50.37px;font:400 28.5px/1 'Liberation Sans',sans-serif;color:#fff;transform:scaleX(1.0330);transform-origin:0 0;-webkit-text-stroke:0.3px #fff;">Points</div>
<div class="t" style="left:1049.53px;top:53.68px;font:400 24.0px/1 'Liberation Sans',sans-serif;color:#fff;transform:scaleX(0.9699);transform-origin:0 0;">9:16</div>
<div class="t" style="left:1309.95px;top:53.68px;font:400 24.0px/1 'Liberation Sans',sans-serif;color:#fff;transform:scaleX(1.0494);transform-origin:0 0;">89%</div>
<div class="t" style="left:744.56px;top:248.68px;font:400 37.0px/1 'Liberation Sans',sans-serif;color:#ff2a00;transform:scaleX(0.9811);transform-origin:0 0;">Drag the blue border to change position and size</div>
<div class="t" style="left:1491.92px;top:46.76px;font:400 31.0px/1 'Liberation Sans',sans-serif;color:#fff;transform:scaleX(1.0817);transform-origin:0 0;-webkit-text-stroke:0.4px #fff;">Components</div>
<div class="t" style="left:1591.92px;top:121.64px;font:400 27.0px/1 'Liberation Sans',sans-serif;color:#fff;transform:scaleX(1.0807);transform-origin:0 0;-webkit-text-stroke:0.500px #fff;">2D locs &amp; transform</div>
<div class="t" style="left:2029.00px;top:123.98px;font:400 24.0px/1 'Liberation Sans',sans-serif;color:#e4e4e9;-webkit-text-stroke:0.700px #e4e4e9;">?</div>
<div class="t" style="left:1735.24px;top:213.76px;font:400 24.5px/1 'Liberation Sans',sans-serif;color:#000;letter-spacing:0.076px;transform:scaleX(1.1300);transform-origin:0 0;">Basic</div>
<div class="t" style="left:1842.00px;top:213.76px;font:400 24.5px/1 'Liberation Sans',sans-serif;color:#fff;transform:scaleX(1.1030);transform-origin:0 0;">Advanced</div>
<div class="t" style="left:1555.41px;top:302.41px;font:400 25.5px/1 'Liberation Sans',sans-serif;color:#fff;transform:scaleX(1.0945);transform-origin:0 0;">Size</div>
<div class="t" style="left:1554.24px;top:372.41px;font:400 25.5px/1 'Liberation Sans',sans-serif;color:#fff;letter-spacing:0.778px;transform:scaleX(1.1300);transform-origin:0 0;">Location</div>
<div class="t" style="left:1554.24px;top:442.41px;font:400 25.5px/1 'Liberation Sans',sans-serif;color:#fff;letter-spacing:0.720px;transform:scaleX(1.1300);transform-origin:0 0;">Rotate</div>
<div class="t" style="left:1555.37px;top:512.41px;font:400 25.5px/1 'Liberation Sans',sans-serif;color:#fff;transform:scaleX(1.1261);transform-origin:0 0;">Scale</div>
<div class="t" style="left:1555.37px;top:582.41px;font:400 25.5px/1 'Liberation Sans',sans-serif;color:#fff;letter-spacing:0.189px;transform:scaleX(1.1300);transform-origin:0 0;">Center</div>
<div class="t" style="left:1737.56px;top:302.41px;font:400 25.5px/1 'Liberation Sans',sans-serif;color:#fff;transform:scaleX(0.9429);transform-origin:0 0;width:155.8px;overflow:hidden;padding-bottom:0.3em;">538.51183765</div>
<div class="t" style="left:1884.00px;top:302.84px;font:400 25px/1 'Liberation Sans',sans-serif;color:#8b8c96;">X</div>
<div class="t" style="left:1970.53px;top:302.41px;font:400 25.5px/1 'Liberation Sans',sans-serif;color:#fff;transform:scaleX(0.9714);transform-origin:0 0;">957.3618940</div>
<div class="t" style="left:2117.00px;top:302.84px;font:400 25px/1 'Liberation Sans',sans-serif;color:#8b8c96;">Y</div>
<div class="t" style="left:1738.00px;top:372.41px;font:400 25.5px/1 'Liberation Sans',sans-serif;color:#fff;">−0.072669322</div>
<div class="t" style="left:1904.00px;top:372.84px;font:400 25px/1 'Liberation Sans',sans-serif;color:#8b8c96;">X</div>
<div class="t" style="left:1950.55px;top:372.41px;font:400 25.5px/1 'Liberation Sans',sans-serif;color:#fff;transform:scaleX(0.9542);transform-origin:0 0;">0.315046401</div>
<div class="t" style="left:2117.00px;top:372.84px;font:400 25px/1 'Liberation Sans',sans-serif;color:#8b8c96;">Y</div>
<div class="t" style="left:1737.50px;top:442.41px;font:400 25.5px/1 'Liberation Sans',sans-serif;color:#fff;">0</div>
<div class="t" style="left:1739.00px;top:512.41px;font:400 25.5px/1 'Liberation Sans',sans-serif;color:#fff;">1</div>
<div class="t" style="left:1904.00px;top:512.84px;font:400 25px/1 'Liberation Sans',sans-serif;color:#8b8c96;">X</div>
<div class="t" style="left:1952.00px;top:512.41px;font:400 25.5px/1 'Liberation Sans',sans-serif;color:#fff;">1</div>
<div class="t" style="left:2117.00px;top:512.84px;font:400 25px/1 'Liberation Sans',sans-serif;color:#8b8c96;">Y</div>
<div class="t" style="left:1737.50px;top:582.41px;font:400 25.5px/1 'Liberation Sans',sans-serif;color:#fff;">0</div>
<div class="t" style="left:1904.00px;top:582.84px;font:400 25px/1 'Liberation Sans',sans-serif;color:#8b8c96;">X</div>
<div class="t" style="left:1950.50px;top:582.41px;font:400 25.5px/1 'Liberation Sans',sans-serif;color:#fff;">0</div>
<div class="t" style="left:2117.00px;top:582.84px;font:400 25px/1 'Liberation Sans',sans-serif;color:#8b8c96;">Y</div>
<div class="t" style="left:1512.93px;top:645.14px;font:400 27.0px/1 'Liberation Sans',sans-serif;color:#fff;transform:scaleX(1.0373);transform-origin:0 0;-webkit-text-stroke:0.500px #fff;">Flip</div>
<div class="t" style="left:1590.82px;top:745.64px;font:400 27.0px/1 'Liberation Sans',sans-serif;color:#fff;transform:scaleX(1.0899);transform-origin:0 0;-webkit-text-stroke:0.500px #fff;">Image</div>
<div class="t" style="left:1977.00px;top:748.18px;font:400 24.0px/1 'Liberation Sans',sans-serif;color:#e4e4e9;-webkit-text-stroke:0.700px #e4e4e9;">?</div>
<div class="t" style="left:1522.24px;top:810.91px;font:400 25.5px/1 'Liberation Sans',sans-serif;color:#fff;letter-spacing:0.348px;transform:scaleX(1.1300);transform-origin:0 0;">Image file</div>
<div class="t" style="left:1836.54px;top:810.41px;font:400 25.5px/1 'Liberation Sans',sans-serif;color:#fff;transform:scaleX(0.9819);transform-origin:0 0;width:262.2px;overflow:hidden;padding-bottom:0.3em;">RenderTarget_FaceInset</div>
<div class="t" style="left:1522.24px;top:886.41px;font:400 25.5px/1 'Liberation Sans',sans-serif;color:#fff;letter-spacing:0.285px;transform:scaleX(1.1300);transform-origin:0 0;">Fill mode</div>
<div class="t" style="left:1740.98px;top:886.41px;font:400 25.5px/1 'Liberation Sans',sans-serif;color:#fff;transform:scaleX(1.0160);transform-origin:0 0;">Scale to display in whole</div>
<div class="t" style="left:1590.80px;top:979.64px;font:400 27.0px/1 'Liberation Sans',sans-serif;color:#fff;transform:scaleX(1.1022);transform-origin:0 0;-webkit-text-stroke:0.500px #fff;">Blend mode</div>
<div class="t" style="left:1977.00px;top:982.18px;font:400 24.0px/1 'Liberation Sans',sans-serif;color:#e4e4e9;-webkit-text-stroke:0.700px #e4e4e9;">?</div>
<div class="t" style="left:1522.24px;top:1044.91px;font:400 25.5px/1 'Liberation Sans',sans-serif;color:#fff;letter-spacing:0.264px;transform:scaleX(1.1300);transform-origin:0 0;">Blend mode</div>
<div class="t" style="left:1739.94px;top:1044.41px;font:400 25.5px/1 'Liberation Sans',sans-serif;color:#fff;transform:scaleX(1.0317);transform-origin:0 0;">Normal</div>
<div class="t" style="left:1524.50px;top:1120.41px;font:400 25.5px/1 'Liberation Sans',sans-serif;color:#fff;transform:scaleX(1.1243);transform-origin:0 0;">Transparency</div>
<div class="t" style="left:2083.00px;top:1120.41px;font:400 25.5px/1 'Liberation Sans',sans-serif;color:#fff;letter-spacing:0.300px;width:48.0px;overflow:hidden;padding-bottom:0.3em;">100%</div>
<div class="t" style="left:1798.00px;top:1415.99px;font:400 26.0px/1 'Liberation Sans',sans-serif;color:#fff;transform:scaleX(1.0679);transform-origin:0 0;">Add co…</div>
<div class="t" style="left:2216.87px;top:46.68px;font:400 30.5px/1 'Liberation Sans',sans-serif;color:#fff;transform:scaleX(1.0656);transform-origin:0 0;-webkit-text-stroke:0.400px #fff;">Preview</div>
<div class="t" style="left:2356.50px;top:43.64px;font:400 33.5px/1 'Liberation Sans',sans-serif;color:#8e90a4;">·High-performance device</div>
<div class="t" style="left:2228.50px;top:127.22px;font:400 27.5px/1 'Liberation Sans',sans-serif;color:#fff;transform:scaleX(1.0486);transform-origin:0 0;-webkit-text-stroke:0.300px #fff;">Woman…</div>
<div class="t" style="left:2429.53px;top:129.68px;font:400 24.0px/1 'Liberation Sans',sans-serif;color:#fff;transform:scaleX(0.9699);transform-origin:0 0;">9:16</div>
<div class="t" style="left:2269.48px;top:965.41px;font:400 25.5px/1 'Liberation Sans',sans-serif;color:#8b8d9e;transform:scaleX(1.0196);transform-origin:0 0;">00:00.00</div>
<div class="t" style="left:2736.48px;top:965.41px;font:400 25.5px/1 'Liberation Sans',sans-serif;color:#8b8d9e;transform:scaleX(1.0196);transform-origin:0 0;">01:00.00</div>
<div class="t" style="left:2381.53px;top:1052.49px;font:400 26.0px/1 'Liberation Sans',sans-serif;color:#fff;transform:scaleX(0.9673);transform-origin:0 0;-webkit-text-stroke:0.300px #fff;">Screenshot</div>
<div class="t" style="left:2537.51px;top:1052.49px;font:400 26.0px/1 'Liberation Sans',sans-serif;color:#fff;transform:scaleX(0.9960);transform-origin:0 0;-webkit-text-stroke:0.300px #fff;">Export video</div>
<div class="t" style="left:2230.80px;top:1173.64px;font:400 27.0px/1 'Liberation Sans',sans-serif;color:#f2f2f2;transform:scaleX(1.1003);transform-origin:0 0;">Material info</div>
<div class="t" style="left:2233.00px;top:1227.45px;font:400 22.5px/1 'Liberation Sans',sans-serif;color:#8b8d9e;transform:scaleX(1.0706);transform-origin:0 0;font-family:'Liberation Sans','Noto Sans CJK SC',sans-serif;">素材1:</div>
<div class="t" style="left:2313.00px;top:1225.76px;font:400 24.5px/1 'Liberation Sans',sans-serif;color:#8b8d9e;transform:scaleX(1.0341);transform-origin:0 0;">female-single-video-fa…</div>
<div class="t" style="left:2727.50px;top:1225.76px;font:400 24.5px/1 'Liberation Sans',sans-serif;color:#8b8d9e;">601.61 KB</div>
</body></html>
